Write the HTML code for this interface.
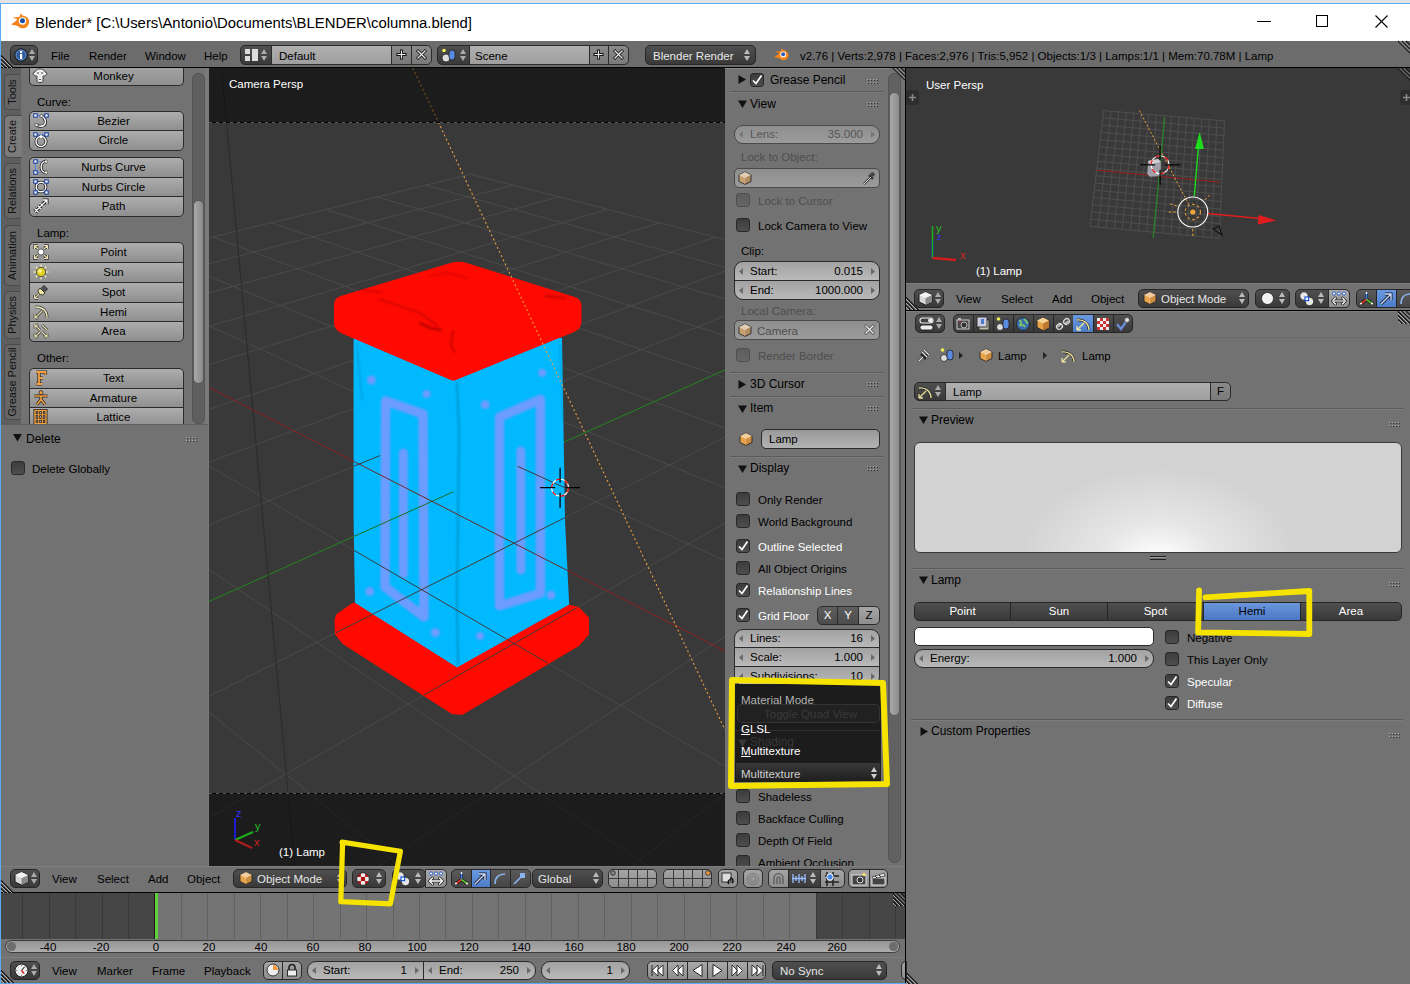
<!DOCTYPE html><html><head><meta charset="utf-8"><style>
*{margin:0;padding:0;box-sizing:border-box}
html,body{width:1410px;height:984px;overflow:hidden;background:#727272;position:relative;font-family:"Liberation Sans",sans-serif}
.t{position:absolute;white-space:nowrap;font-size:11.5px;line-height:14px;color:#000}
.a{position:absolute}
svg.a{overflow:visible}
.tb{background:linear-gradient(#adadad,#8f8f8f);border:1px solid #2b2b2b}
.nm{background:linear-gradient(#a2a2a2,#b9b9b9);border:1px solid #2b2b2b}
.nmd{background:linear-gradient(#8e8e8e,#9c9c9c);border:1px solid #4a4a4a}
.mn{background:linear-gradient(#4f4f4f,#393939);border:1px solid #262626}
.tf{background:linear-gradient(#999,#b3b3b3);border:1px solid #2b2b2b}
.ck{background:linear-gradient(#3c3c3c,#4e4e4e);border:1px solid #282828;border-radius:3px}
.ckd{background:linear-gradient(#5d5d5d,#666);border:1px solid #4f4f4f;border-radius:3px}
.w{color:#fff}
.l{color:#e6e6e6}
</style></head><body><div class="a" style="left:0px;top:0px;width:1410px;height:3px;background:#e3e3e3"></div>
<div class="a" style="left:0px;top:3px;width:1410px;height:1px;background:#5aacf5"></div>
<div class="a" style="left:0px;top:4px;width:1410px;height:37px;background:#fff"></div>
<div class="a" style="left:0px;top:3px;width:1px;height:981px;background:#5aacf5"></div>
<div class="a" style="left:0px;top:982px;width:1410px;height:2px;background:#5aacf5"></div>
<svg class="a" style="left:11px;top:13px;" width="20" height="18" viewBox="0 0 20 18"><g transform="scale(1.0)"><circle cx="11.8" cy="9" r="6.3" fill="#f5841a"/><path d="M0 11.5 L7 6.5 L1.5 4.5 L8.5 4 L9.5 0.5 L12.5 3 L11.5 14 L5 12.5Z" fill="#f5841a"/><circle cx="11.5" cy="8" r="3.7" fill="#fff"/><circle cx="11.5" cy="7.8" r="2.5" fill="#1a4fa0"/></g></svg>
<div class="t" style="left:35px;top:15px;font-size:14.9px;line-height:17px;color:#000">Blender* [C:\Users\Antonio\Documents\BLENDER\columna.blend]</div>
<div class="a" style="left:1257px;top:21px;width:14px;height:1px;background:#000"></div>
<div class="a" style="left:1316px;top:15px;width:12px;height:12px;border:1px solid #000"></div>
<svg class="a" style="left:1375px;top:15px;" width="13" height="13" viewBox="0 0 13 13"><path d="M0.5 0.5 L12.5 12.5 M12.5 0.5 L0.5 12.5" stroke="#000" stroke-width="1.1"/></svg>
<div class="a" style="left:1px;top:41px;width:1409px;height:26px;background:#6c6c6c"></div>
<div class="a" style="left:1px;top:67px;width:1409px;height:1px;background:#000"></div>
<svg class="a" style="left:1px;top:55px;" width="13" height="13" viewBox="0 0 13 13"><path d="M0 0.5 L12.5 13 M0 4.5 L8.5 13 M0 8.5 L4.5 13" stroke="#111" stroke-width="1.1"/><path d="M0 2 L11 13 M0 6 L7 13 M0 10 L3 13" stroke="#b8b8b8" stroke-width="0.9"/></svg>
<svg class="a" style="left:1398px;top:41px;" width="12" height="12" viewBox="0 0 12 12"><path d="M0 0 L12 12 M4 0 L12 8 M8 0 L12 4" stroke="#1e1e1e" stroke-width="1.3"/><path d="M1.5 0 L12 10.5 M5.5 0 L12 6.5" stroke="#b0b0b0" stroke-width="0.7"/></svg>
<div class="a mn" style="left:10px;top:45px;width:28px;height:20px;border-radius:5px 5px 5px 5px;"></div>
<svg class="a" style="left:14px;top:48px;" width="14" height="14" viewBox="0 0 14 14"><circle cx="7" cy="7" r="6.2" fill="#2f5a9a" stroke="#111" stroke-width="1"/><circle cx="7" cy="7" r="5" fill="none" stroke="#7aa0d8" stroke-width="0.8"/><rect x="6" y="6" width="2.2" height="5" fill="#fff"/><circle cx="7.1" cy="4" r="1.2" fill="#fff"/></svg>
<svg class="a" style="left:29px;top:49px;" width="6" height="12" viewBox="0 0 6 12"><path d="M0 5 L3 0 L6 5Z M0 7 L3 12 L6 7Z" fill="#aaa"/></svg>
<div class="t" style="left:51px;top:49px;">File</div>
<div class="t" style="left:89px;top:49px;">Render</div>
<div class="t" style="left:145px;top:49px;">Window</div>
<div class="t" style="left:204px;top:49px;">Help</div>
<div class="a mn" style="left:240px;top:45px;width:32px;height:20px;border-radius:5px 0 0 5px;"></div>
<svg class="a" style="left:245px;top:49px;" width="14" height="12" viewBox="0 0 14 12"><rect x="0" y="0" width="5" height="5" fill="#ddd"/><rect x="0" y="7" width="5" height="5" fill="#ddd"/><rect x="7" y="0" width="6" height="12" fill="#ddd"/></svg>
<svg class="a" style="left:261px;top:49px;" width="6" height="12" viewBox="0 0 6 12"><path d="M0 5 L3 0 L6 5Z M0 7 L3 12 L6 7Z" fill="#aaa"/></svg>
<div class="a tf" style="left:271px;top:45px;width:121px;height:20px;border-radius:0 0 0 0;background:linear-gradient(#b0b0b0,#9e9e9e)"></div>
<div class="t" style="left:279px;top:49px;">Default</div>
<div class="a tb" style="left:391px;top:45px;width:21px;height:20px;border-radius:0 0 0 0;background:linear-gradient(#8a8a8a,#7a7a7a)"></div>
<div class="a tb" style="left:411px;top:45px;width:21px;height:20px;border-radius:0 5px 5px 0;background:linear-gradient(#8a8a8a,#7a7a7a)"></div>
<svg class="a" style="left:396px;top:49px;" width="11" height="11" viewBox="0 0 11 11"><path d="M5.5 0.5 V10.5 M0.5 5.5 H10.5" stroke="#111" stroke-width="3"/><path d="M5.5 1.5 V9.5 M1.5 5.5 H9.5" stroke="#eee" stroke-width="1.2"/></svg>
<svg class="a" style="left:416px;top:49px;" width="11" height="11" viewBox="0 0 11 11"><path d="M1 1 L10 10 M10 1 L1 10" stroke="#111" stroke-width="3"/><path d="M1.5 1.5 L9.5 9.5 M9.5 1.5 L1.5 9.5" stroke="#eee" stroke-width="1.2"/></svg>
<div class="a mn" style="left:437px;top:45px;width:33px;height:20px;border-radius:5px 0 0 5px;"></div>
<svg class="a" style="left:441px;top:48px;" width="16" height="15" viewBox="0 0 16 15"><circle cx="5" cy="10" r="4" fill="#ddd" stroke="#222" stroke-width="0.8"/><rect x="8" y="2" width="6" height="10" rx="3" fill="#5a8be0" stroke="#222" stroke-width="0.8"/><circle cx="3" cy="2.5" r="1.8" fill="#ee5"/></svg>
<svg class="a" style="left:460px;top:49px;" width="6" height="12" viewBox="0 0 6 12"><path d="M0 5 L3 0 L6 5Z M0 7 L3 12 L6 7Z" fill="#aaa"/></svg>
<div class="a tf" style="left:469px;top:45px;width:121px;height:20px;border-radius:0 0 0 0;background:linear-gradient(#b0b0b0,#9e9e9e)"></div>
<div class="t" style="left:475px;top:49px;">Scene</div>
<div class="a tb" style="left:589px;top:45px;width:20px;height:20px;border-radius:0 0 0 0;background:linear-gradient(#8a8a8a,#7a7a7a)"></div>
<div class="a tb" style="left:608px;top:45px;width:21px;height:20px;border-radius:0 5px 5px 0;background:linear-gradient(#8a8a8a,#7a7a7a)"></div>
<svg class="a" style="left:593px;top:49px;" width="11" height="11" viewBox="0 0 11 11"><path d="M5.5 0.5 V10.5 M0.5 5.5 H10.5" stroke="#111" stroke-width="3"/><path d="M5.5 1.5 V9.5 M1.5 5.5 H9.5" stroke="#eee" stroke-width="1.2"/></svg>
<svg class="a" style="left:613px;top:49px;" width="11" height="11" viewBox="0 0 11 11"><path d="M1 1 L10 10 M10 1 L1 10" stroke="#111" stroke-width="3"/><path d="M1.5 1.5 L9.5 9.5 M9.5 1.5 L1.5 9.5" stroke="#eee" stroke-width="1.2"/></svg>
<div class="a mn" style="left:645px;top:45px;width:111px;height:20px;border-radius:5px 5px 5px 5px;"></div>
<div class="t" style="left:653px;top:49px;color:#e8e8e8">Blender Render</div>
<svg class="a" style="left:744px;top:49px;" width="6" height="12" viewBox="0 0 6 12"><path d="M0 5 L3 0 L6 5Z M0 7 L3 12 L6 7Z" fill="#bbb"/></svg>
<svg class="a" style="left:774px;top:48px;" width="20" height="18" viewBox="0 0 20 18"><g transform="scale(0.8)"><circle cx="11.8" cy="9" r="6.3" fill="#f5841a"/><path d="M0 11.5 L7 6.5 L1.5 4.5 L8.5 4 L9.5 0.5 L12.5 3 L11.5 14 L5 12.5Z" fill="#f5841a"/><circle cx="11.5" cy="8" r="3.7" fill="#fff"/><circle cx="11.5" cy="7.8" r="2.5" fill="#2a5bb5"/></g></svg>
<div class="t" style="left:800px;top:49px;">v2.76 | Verts:2,978 | Faces:2,976 | Tris:5,952 | Objects:1/3 | Lamps:1/1 | Mem:70.78M | Lamp</div>
<div class="a" style="left:1px;top:68px;width:207px;height:798px;background:#727272"></div>
<div class="a" style="left:205px;top:68px;width:4px;height:798px;background:#7a7a7a"></div>
<div class="a" style="left:1px;top:68px;width:20px;height:357px;background:#5e5e5e"></div>
<div class="a" style="left:4px;top:74px;width:16px;height:36px;background:#666666;border-radius:5px 0 0 5px;border:1px solid #4a4a4a;border-right:none"></div>
<div class="t" style="left:4px;top:110px;width:36px;height:16px;line-height:16px;text-align:center;transform-origin:0 0;transform:rotate(-90deg);font-size:11px;color:#111">Tools</div>
<div class="a" style="left:4px;top:115px;width:18px;height:43px;background:#7b7b7b;border-radius:5px 0 0 5px;border:1px solid #4a4a4a;border-right:none"></div>
<div class="t" style="left:4px;top:158px;width:43px;height:16px;line-height:16px;text-align:center;transform-origin:0 0;transform:rotate(-90deg);font-size:11px;color:#111">Create</div>
<div class="a" style="left:4px;top:163px;width:16px;height:56px;background:#666666;border-radius:5px 0 0 5px;border:1px solid #4a4a4a;border-right:none"></div>
<div class="t" style="left:4px;top:219px;width:56px;height:16px;line-height:16px;text-align:center;transform-origin:0 0;transform:rotate(-90deg);font-size:11px;color:#111">Relations</div>
<div class="a" style="left:4px;top:225px;width:16px;height:61px;background:#666666;border-radius:5px 0 0 5px;border:1px solid #4a4a4a;border-right:none"></div>
<div class="t" style="left:4px;top:286px;width:61px;height:16px;line-height:16px;text-align:center;transform-origin:0 0;transform:rotate(-90deg);font-size:11px;color:#111">Animation</div>
<div class="a" style="left:4px;top:291px;width:16px;height:48px;background:#666666;border-radius:5px 0 0 5px;border:1px solid #4a4a4a;border-right:none"></div>
<div class="t" style="left:4px;top:339px;width:48px;height:16px;line-height:16px;text-align:center;transform-origin:0 0;transform:rotate(-90deg);font-size:11px;color:#111">Physics</div>
<div class="a" style="left:4px;top:344px;width:16px;height:76px;background:#666666;border-radius:5px 0 0 5px;border:1px solid #4a4a4a;border-right:none"></div>
<div class="t" style="left:4px;top:420px;width:76px;height:16px;line-height:16px;text-align:center;transform-origin:0 0;transform:rotate(-90deg);font-size:11px;color:#111">Grease Pencil</div>
<div class="a" style="left:192px;top:73px;width:13px;height:351px;background:#5f5f5f;border:1px solid #555;border-radius:6px"></div>
<div class="a" style="left:193px;top:200px;width:11px;height:184px;background:linear-gradient(90deg,#a9a9a9,#8a8a8a);border-radius:6px;border:1px solid #5a5a5a"></div>
<div class="a tb" style="left:29px;top:68px;width:155px;height:18px;border-radius:0 0 5px 5px;border-top:none;background:linear-gradient(#a2a2a2,#8f8f8f)"></div>
<div class="t" style="left:43px;top:67px;width:141px;height:19px;line-height:19px;text-align:center;">Monkey</div>
<svg class="a" style="left:32px;top:68px;" width="16" height="16" viewBox="0 0 16 16"><path d="M8 1 C4 1 4 3 3 4 C1 4 0.5 6 2 7 C3 8 4 8 5 8 L5 13 C5 15 11 15 11 13 L11 8 C12 8 13 8 14 7 C15.5 6 15 4 13 4 C12 3 12 1 8 1Z" fill="#eee" stroke="#333" stroke-width="0.9"/><circle cx="6" cy="5" r="1" fill="#777"/><circle cx="10" cy="5" r="1" fill="#777"/><rect x="7" y="11" width="2" height="1" fill="#555"/></svg>
<div class="t" style="left:37px;top:95px;">Curve:</div>
<div class="a tb" style="left:29px;top:111px;width:155px;height:20px;border-radius:5px 5px 0 0;"></div>
<div class="t" style="left:43px;top:111px;width:141px;height:20px;line-height:20px;text-align:center;">Bezier</div>
<svg class="a" style="left:33px;top:113px;" width="16" height="16" viewBox="0 0 16 16"><path d="M2.5 2.5 H13.5" stroke="#5a8ae0" stroke-width="1.2"/><path d="M8.5 3 C13 5 13.5 11 10.5 12.5 C8 13.8 5 13 3.5 12" fill="none" stroke="#1a1a1a" stroke-width="3"/><path d="M8.5 3 C13 5 13.5 11 10.5 12.5 C8 13.8 5 13 3.5 12" fill="none" stroke="#fff" stroke-width="1.4"/><circle cx="8.5" cy="3" r="1.6" fill="#fff" stroke="#222" stroke-width="0.6"/><circle cx="3.5" cy="12" r="1.6" fill="#fff" stroke="#222" stroke-width="0.6"/><rect x="0.8" y="0.8" width="3.4" height="3.4" fill="#fff" stroke="#1b3f9a" stroke-width="1.1"/><rect x="11.8" y="0.8" width="3.4" height="3.4" fill="#fff" stroke="#1b3f9a" stroke-width="1.1"/></svg>
<div class="a tb" style="left:29px;top:130px;width:155px;height:21px;border-radius:0 0 5px 5px;"></div>
<div class="t" style="left:43px;top:130px;width:141px;height:21px;line-height:21px;text-align:center;">Circle</div>
<svg class="a" style="left:33px;top:132px;" width="16" height="16" viewBox="0 0 16 16"><path d="M2.5 2.5 H13.5" stroke="#5a8ae0" stroke-width="1.2"/><circle cx="8" cy="9.5" r="5" fill="none" stroke="#1a1a1a" stroke-width="3"/><circle cx="8" cy="9.5" r="5" fill="none" stroke="#fff" stroke-width="1.4"/><circle cx="8" cy="4.5" r="1.5" fill="#fff"/><rect x="0.8" y="0.8" width="3.4" height="3.4" fill="#fff" stroke="#1b3f9a" stroke-width="1.1"/><rect x="11.8" y="0.8" width="3.4" height="3.4" fill="#fff" stroke="#1b3f9a" stroke-width="1.1"/></svg>
<div class="a tb" style="left:29px;top:157px;width:155px;height:21px;border-radius:5px 5px 0 0;"></div>
<div class="t" style="left:43px;top:157px;width:141px;height:21px;line-height:21px;text-align:center;">Nurbs Curve</div>
<svg class="a" style="left:33px;top:159px;" width="16" height="16" viewBox="0 0 16 16"><path d="M2.5 2.5 V13.5 M2.5 2.5 H8 M2.5 13.5 H8" fill="none" stroke="#5a8ae0" stroke-width="1.2"/><path d="M13 2.5 C6.5 2.5 6.5 13.5 13 13.5" fill="none" stroke="#1a1a1a" stroke-width="3"/><path d="M13 2.5 C6.5 2.5 6.5 13.5 13 13.5" fill="none" stroke="#fff" stroke-width="1.4"/><circle cx="13" cy="2.5" r="1.6" fill="#fff" stroke="#222" stroke-width="0.6"/><circle cx="13" cy="13.5" r="1.6" fill="#fff" stroke="#222" stroke-width="0.6"/><rect x="0.8" y="0.8" width="3.4" height="3.4" fill="#fff" stroke="#1b3f9a" stroke-width="1.1"/><rect x="0.8" y="11.8" width="3.4" height="3.4" fill="#fff" stroke="#1b3f9a" stroke-width="1.1"/></svg>
<div class="a tb" style="left:29px;top:177px;width:155px;height:20px;border-radius:0 0 0 0;"></div>
<div class="t" style="left:43px;top:177px;width:141px;height:20px;line-height:20px;text-align:center;">Nurbs Circle</div>
<svg class="a" style="left:33px;top:179px;" width="16" height="16" viewBox="0 0 16 16"><rect x="2.5" y="2.5" width="11" height="11" fill="none" stroke="#5a8ae0" stroke-width="1"/><circle cx="8" cy="8" r="4.8" fill="none" stroke="#1a1a1a" stroke-width="3"/><circle cx="8" cy="8" r="4.8" fill="none" stroke="#fff" stroke-width="1.4"/><rect x="0.8" y="0.8" width="3.4" height="3.4" fill="#fff" stroke="#1b3f9a" stroke-width="1.1"/><rect x="11.8" y="0.8" width="3.4" height="3.4" fill="#fff" stroke="#1b3f9a" stroke-width="1.1"/><rect x="0.8" y="11.8" width="3.4" height="3.4" fill="#fff" stroke="#1b3f9a" stroke-width="1.1"/><rect x="11.8" y="11.8" width="3.4" height="3.4" fill="#fff" stroke="#1b3f9a" stroke-width="1.1"/></svg>
<div class="a tb" style="left:29px;top:196px;width:155px;height:21px;border-radius:0 0 5px 5px;"></div>
<div class="t" style="left:43px;top:196px;width:141px;height:21px;line-height:21px;text-align:center;">Path</div>
<svg class="a" style="left:33px;top:198px;" width="16" height="16" viewBox="0 0 16 16"><path d="M2 14 L14 2 M9.5 2 H14 V6.5 M5 8 L8 11 M7.5 5.5 L10.5 8.5 M1.5 10.5 L5.5 14.5" fill="none" stroke="#1a1a1a" stroke-width="3"/><path d="M2 14 L14 2 M9.5 2 H14 V6.5 M5 8 L8 11 M7.5 5.5 L10.5 8.5 M1.5 10.5 L5.5 14.5" fill="none" stroke="#fff" stroke-width="1.3"/></svg>
<div class="t" style="left:37px;top:226px;">Lamp:</div>
<div class="a tb" style="left:29px;top:242px;width:155px;height:21px;border-radius:5px 5px 0 0;"></div>
<div class="t" style="left:43px;top:242px;width:141px;height:21px;line-height:21px;text-align:center;">Point</div>
<svg class="a" style="left:33px;top:244px;" width="16" height="16" viewBox="0 0 16 16"><path d="M1.5 5 V1.5 H5 M11 1.5 H14.5 V5 M14.5 11 V14.5 H11 M5 14.5 H1.5 V11 M2 2 L5 5 M14 2 L11 5 M14 14 L11 11 M2 14 L5 11" fill="none" stroke="#333" stroke-width="2.6"/><path d="M1.5 5 V1.5 H5 M11 1.5 H14.5 V5 M14.5 11 V14.5 H11 M5 14.5 H1.5 V11 M2 2 L5 5 M14 2 L11 5 M14 14 L11 11 M2 14 L5 11" fill="none" stroke="#e8e2b0" stroke-width="1.2"/><circle cx="8" cy="8" r="3" fill="#fff" stroke="#444" stroke-width="0.8"/></svg>
<div class="a tb" style="left:29px;top:262px;width:155px;height:21px;border-radius:0 0 0 0;"></div>
<div class="t" style="left:43px;top:262px;width:141px;height:21px;line-height:21px;text-align:center;">Sun</div>
<svg class="a" style="left:33px;top:264px;" width="16" height="16" viewBox="0 0 16 16"><path d="M8 0.5 V15.5 M0.5 8 H15.5 M2.7 2.7 L13.3 13.3 M13.3 2.7 L2.7 13.3" stroke="#e8e2b0" stroke-width="1.4"/><circle cx="8" cy="8" r="4.6" fill="#e0d020" stroke="#444" stroke-width="0.9"/><circle cx="7" cy="7" r="1.8" fill="#fff8a0"/></svg>
<div class="a tb" style="left:29px;top:282px;width:155px;height:21px;border-radius:0 0 0 0;"></div>
<div class="t" style="left:43px;top:282px;width:141px;height:21px;line-height:21px;text-align:center;">Spot</div>
<svg class="a" style="left:33px;top:284px;" width="16" height="16" viewBox="0 0 16 16"><path d="M7 4 L12 9 L9.5 11 C7 11 5 9 5 6.5Z" fill="#ede6a0" stroke="#222" stroke-width="0.9"/><path d="M8.5 4 L11 1.5 L14.5 5 L12 7.5Z" fill="#555" stroke="#222" stroke-width="0.9"/><path d="M1.5 14.5 L6 10 M1.5 14.5 H5 M1.5 14.5 V11" stroke="#333" stroke-width="2.4"/><path d="M1.5 14.5 L6 10 M1.5 14.5 H5 M1.5 14.5 V11" stroke="#e8e2b0" stroke-width="1.1"/></svg>
<div class="a tb" style="left:29px;top:302px;width:155px;height:20px;border-radius:0 0 0 0;"></div>
<div class="t" style="left:43px;top:302px;width:141px;height:20px;line-height:20px;text-align:center;">Hemi</div>
<svg class="a" style="left:33px;top:304px;" width="16" height="16" viewBox="0 0 16 16"><path d="M2.5 3 C9.5 2.5 14.5 7.5 14 14" fill="none" stroke="#333" stroke-width="2.8"/><path d="M2.5 3 C9.5 2.5 14.5 7.5 14 14" fill="none" stroke="#f0eab8" stroke-width="1.4"/><path d="M2 14 L9 7 M2 14 H6 M2 14 V10" stroke="#333" stroke-width="2.6"/><path d="M2 14 L9 7 M2 14 H6 M2 14 V10" stroke="#e8e2b0" stroke-width="1.2"/></svg>
<div class="a tb" style="left:29px;top:321px;width:155px;height:21px;border-radius:0 0 5px 5px;"></div>
<div class="t" style="left:43px;top:321px;width:141px;height:21px;line-height:21px;text-align:center;">Area</div>
<svg class="a" style="left:33px;top:323px;" width="16" height="16" viewBox="0 0 16 16"><path d="M2 14 L7 9 M2 14 H5.5 M2 14 V10.5 M9 2 L14 7 M14 14 L9 9 M14 14 H10.5 M14 14 V10.5 M2 2 L7 7 M2 2 H5.5 M2 2 V5.5" fill="none" stroke="#333" stroke-width="2.6"/><path d="M2 14 L7 9 M2 14 H5.5 M2 14 V10.5 M9 2 L14 7 M14 14 L9 9 M14 14 H10.5 M14 14 V10.5 M2 2 L7 7 M2 2 H5.5 M2 2 V5.5" fill="none" stroke="#e8e2b0" stroke-width="1.2"/></svg>
<div class="t" style="left:37px;top:351px;">Other:</div>
<div class="a tb" style="left:29px;top:368px;width:155px;height:21px;border-radius:5px 5px 0 0;"></div>
<div class="t" style="left:43px;top:368px;width:141px;height:21px;line-height:21px;text-align:center;">Text</div>
<svg class="a" style="left:33px;top:370px;" width="16" height="16" viewBox="0 0 16 16"><path d="M3 2 H12.5 V5 M6 2 V14 M3.5 14 H9 M6 8 H10" fill="none" stroke="#222" stroke-width="3.2"/><path d="M3 2 H12.5 V5 M6 2 V14 M3.5 14 H9 M6 8 H10" fill="none" stroke="#f5a040" stroke-width="1.8"/></svg>
<div class="a tb" style="left:29px;top:388px;width:155px;height:20px;border-radius:0 0 0 0;"></div>
<div class="t" style="left:43px;top:388px;width:141px;height:20px;line-height:20px;text-align:center;">Armature</div>
<svg class="a" style="left:33px;top:390px;" width="16" height="16" viewBox="0 0 16 16"><path d="M1.5 6 H14.5 M8 6 V9.5 L4 14.5 M8 9.5 L12 14.5" fill="none" stroke="#222" stroke-width="3"/><path d="M1.5 6 H14.5 M8 6 V9.5 L4 14.5 M8 9.5 L12 14.5" fill="none" stroke="#f5a040" stroke-width="1.6"/><circle cx="8" cy="2.6" r="2" fill="#f5a040" stroke="#222" stroke-width="0.8"/></svg>
<div class="a tb" style="left:29px;top:407px;width:155px;height:21px;border-radius:0 0 5px 5px;"></div>
<div class="t" style="left:43px;top:407px;width:141px;height:21px;line-height:21px;text-align:center;">Lattice</div>
<svg class="a" style="left:33px;top:409px;" width="16" height="16" viewBox="0 0 16 16"><rect x="2" y="1.5" width="11" height="13" fill="none" stroke="#222" stroke-width="3"/><path d="M5.7 1.5 V14.5 M9.3 1.5 V14.5 M2 5.8 H13 M2 10.2 H13" stroke="#222" stroke-width="2.6"/><rect x="2" y="1.5" width="11" height="13" fill="none" stroke="#f5a040" stroke-width="1.4"/><path d="M5.7 1.5 V14.5 M9.3 1.5 V14.5 M2 5.8 H13 M2 10.2 H13" stroke="#f5a040" stroke-width="1.1"/></svg>
<div class="a" style="left:1px;top:424px;width:207px;height:442px;background:#727272"></div>
<div class="a" style="left:1px;top:424px;width:207px;height:1px;background:#5e5e5e"></div>
<svg class="a" style="left:13px;top:433px;" width="9" height="9" viewBox="0 0 9 9"><path d="M0 1 H9 L4.5 8.5Z" fill="#111"/></svg>
<div class="t" style="left:26px;top:432px;font-size:12px">Delete</div>
<svg class="a" style="left:186px;top:437px;" width="12" height="6" viewBox="0 0 12 6"><rect x="0" y="0" width="1" height="1" fill="#aaa"/><rect x="1" y="1" width="1" height="1" fill="#333"/><rect x="0" y="3" width="1" height="1" fill="#aaa"/><rect x="1" y="4" width="1" height="1" fill="#333"/><rect x="3" y="0" width="1" height="1" fill="#aaa"/><rect x="4" y="1" width="1" height="1" fill="#333"/><rect x="3" y="3" width="1" height="1" fill="#aaa"/><rect x="4" y="4" width="1" height="1" fill="#333"/><rect x="6" y="0" width="1" height="1" fill="#aaa"/><rect x="7" y="1" width="1" height="1" fill="#333"/><rect x="6" y="3" width="1" height="1" fill="#aaa"/><rect x="7" y="4" width="1" height="1" fill="#333"/><rect x="9" y="0" width="1" height="1" fill="#aaa"/><rect x="10" y="1" width="1" height="1" fill="#333"/><rect x="9" y="3" width="1" height="1" fill="#aaa"/><rect x="10" y="4" width="1" height="1" fill="#333"/></svg>
<div class="a ck" style="left:11px;top:461px;width:14px;height:14px;border-radius:3px 3px 3px 3px;"></div>
<div class="t" style="left:32px;top:462px;">Delete Globally</div>
<svg class="a" style="left:209px;top:68px;overflow:hidden" width="516" height="798" viewBox="0 0 516 798"><defs><filter id="blur1" x="-20%" y="-20%" width="140%" height="140%"><feGaussianBlur stdDeviation="1.1"/></filter></defs><rect x="0" y="0" width="516" height="798" fill="#393939"/><line x1="-1061.1" y1="428.2" x2="261.6" y2="106.2" stroke="#4a4a4a" stroke-width="1" /><line x1="-1061.1" y1="428.2" x2="-623.1" y2="7611.7" stroke="#4a4a4a" stroke-width="1" /><line x1="-1058.6" y1="468.9" x2="304.4" y2="117.1" stroke="#4a4a4a" stroke-width="1" /><line x1="-914.0" y1="392.4" x2="311.4" y2="4537.6" stroke="#4a4a4a" stroke-width="1" /><line x1="-1055.8" y1="514.9" x2="350.0" y2="128.8" stroke="#4a4a4a" stroke-width="1" /><line x1="-781.4" y1="360.1" x2="721.1" y2="3190.0" stroke="#4a4a4a" stroke-width="1" /><line x1="-1052.6" y1="567.2" x2="398.7" y2="141.3" stroke="#4a4a4a" stroke-width="1" /><line x1="-661.4" y1="330.9" x2="951.1" y2="2433.4" stroke="#4a4a4a" stroke-width="1" /><line x1="-1048.9" y1="627.3" x2="450.7" y2="154.7" stroke="#4a4a4a" stroke-width="1" /><line x1="-552.1" y1="304.2" x2="1098.4" y2="1948.8" stroke="#4a4a4a" stroke-width="1" /><line x1="-1044.7" y1="697.0" x2="506.5" y2="169.0" stroke="#4a4a4a" stroke-width="1" /><line x1="-452.2" y1="279.9" x2="1200.8" y2="1612.0" stroke="#4a4a4a" stroke-width="1" /><line x1="-1039.7" y1="778.8" x2="566.5" y2="184.4" stroke="#4a4a4a" stroke-width="1" /><line x1="-360.5" y1="257.6" x2="1276.1" y2="1364.3" stroke="#4a4a4a" stroke-width="1" /><line x1="-1033.7" y1="876.3" x2="631.0" y2="201.0" stroke="#4a4a4a" stroke-width="1" /><line x1="-276.2" y1="237.1" x2="1333.8" y2="1174.4" stroke="#4a4a4a" stroke-width="1" /><line x1="-1017.7" y1="1139.9" x2="776.5" y2="238.3" stroke="#4a4a4a" stroke-width="1" /><line x1="-126.0" y1="200.5" x2="1416.5" y2="902.5" stroke="#4a4a4a" stroke-width="1" /><line x1="-1006.4" y1="1324.5" x2="858.7" y2="259.4" stroke="#4a4a4a" stroke-width="1" /><line x1="-58.8" y1="184.2" x2="1447.1" y2="801.9" stroke="#4a4a4a" stroke-width="1" /><line x1="-991.7" y1="1565.9" x2="948.5" y2="282.4" stroke="#4a4a4a" stroke-width="1" /><line x1="3.7" y1="168.9" x2="1472.8" y2="717.3" stroke="#4a4a4a" stroke-width="1" /><line x1="-971.6" y1="1895.1" x2="1046.9" y2="307.7" stroke="#4a4a4a" stroke-width="1" /><line x1="62.1" y1="154.7" x2="1494.7" y2="645.1" stroke="#4a4a4a" stroke-width="1" /><line x1="-942.6" y1="2370.7" x2="1155.3" y2="335.5" stroke="#4a4a4a" stroke-width="1" /><line x1="116.8" y1="141.4" x2="1513.7" y2="582.9" stroke="#4a4a4a" stroke-width="1" /><line x1="-897.0" y1="3118.5" x2="1275.1" y2="366.2" stroke="#4a4a4a" stroke-width="1" /><line x1="168.0" y1="128.9" x2="1530.1" y2="528.6" stroke="#4a4a4a" stroke-width="1" /><line x1="-814.9" y1="4465.2" x2="1408.4" y2="400.4" stroke="#4a4a4a" stroke-width="1" /><line x1="216.2" y1="117.2" x2="1544.6" y2="480.9" stroke="#4a4a4a" stroke-width="1" /><line x1="-623.1" y1="7611.7" x2="1557.5" y2="438.7" stroke="#4a4a4a" stroke-width="1" /><line x1="261.6" y1="106.2" x2="1557.5" y2="438.7" stroke="#4a4a4a" stroke-width="1" /><line x1="-198.2" y1="218.1" x2="1379.5" y2="1024.3" stroke="#8e1f1f" stroke-width="1" /><line x1="-1026.5" y1="994.2" x2="700.8" y2="218.9" stroke="#22861f" stroke-width="1" /><line x1="12.5" y1="0.0" x2="85.7" y2="798.0" stroke="#2b2b2b" stroke-width="1" /><polygon points="144.6,270.0 144.6,452.0 146.0,536.0 248.0,600.5 360.2,537.0 356.0,452.0 353.0,270.0" fill="#00b9ff" /><polygon points="142.8,536.5 128.0,547.0 126.5,552.0 127.0,566.0 134.0,575.0 243.0,645.0 253.0,646.0 369.0,577.5 379.0,566.0 379.0,550.0 369.0,539.8 360.0,537.8 248.0,600.5 145.8,535.8" fill="#fe0a00" stroke="#fe0a00" stroke-width="2" stroke-linejoin="round"/><g filter="url(#blur1)"><polyline points="176.6,333.0 214.0,346.0 215.0,549.0 176.0,519.0 176.6,333.0" fill="none" stroke="#6c9cff" stroke-width="9.5" stroke-linejoin="round" stroke-linecap="round"/><polyline points="194.4,385.0 194.4,506.0" fill="none" stroke="#6c9cff" stroke-width="9" stroke-linejoin="round" stroke-linecap="round"/><polyline points="290.5,349.0 331.4,331.4 331.4,525.3 290.5,537.8 290.5,349.0" fill="none" stroke="#6c9cff" stroke-width="9.5" stroke-linejoin="round" stroke-linecap="round"/><polyline points="311.8,383.0 311.8,502.0" fill="none" stroke="#6c9cff" stroke-width="9" stroke-linejoin="round" stroke-linecap="round"/><circle cx="162.4" cy="312.0" r="4.5" fill="#6c9cff"/><circle cx="217.5" cy="326.0" r="4" fill="#6c9cff"/><circle cx="160.6" cy="523.6" r="4.5" fill="#6c9cff"/><circle cx="226.4" cy="564.5" r="4.5" fill="#6c9cff"/><circle cx="276.2" cy="336.7" r="4.5" fill="#6c9cff"/><circle cx="333.2" cy="304.7" r="4" fill="#6c9cff"/><circle cx="342.0" cy="527.0" r="4.5" fill="#6c9cff"/><circle cx="271.0" cy="568.0" r="4" fill="#6c9cff"/></g><path d="M241.4 195.1 Q250.0 192.5 258.6 195.2 L365.8 228.9 Q372.5 231.0 372.5 238.0 L372.5 253.0 Q372.5 261.0 365.1 264.0 L246.8 311.9 Q244.0 313.0 241.2 311.8 L132.4 265.2 Q125.0 262.0 125.0 254.0 L125.0 237.0 Q125.0 230.0 131.7 228.0 Z" fill="#fe0a00" /><g filter="url(#blur1)" opacity="0.7"><polyline points="170.0,231.0 211.0,245.0 229.0,258.0" fill="none" stroke="#9a0000" stroke-width="1.2" stroke-linejoin="round" stroke-linecap="round"/><polyline points="221.0,208.0 238.0,205.0 259.0,210.0" fill="none" stroke="#b00000" stroke-width="1.2" stroke-linejoin="round" stroke-linecap="round"/><polyline points="211.0,255.0 221.0,260.0 232.0,262.0" fill="none" stroke="#8a0000" stroke-width="2" stroke-linejoin="round" stroke-linecap="round"/><polyline points="244.0,263.0 242.0,277.0 246.0,284.0" fill="none" stroke="#900000" stroke-width="1.5" stroke-linejoin="round" stroke-linecap="round"/><polyline points="336.0,228.0 357.0,230.0" fill="none" stroke="#900000" stroke-width="1.5" stroke-linejoin="round" stroke-linecap="round"/><polyline points="151.0,222.0 173.0,224.0" fill="none" stroke="#a00000" stroke-width="1.2" stroke-linejoin="round" stroke-linecap="round"/></g><g opacity="0.55" filter="url(#blur1)"><polyline points="248.0,315.0 250.0,362.0 249.0,452.0 248.0,532.0 249.0,597.0" fill="none" stroke="#006a90" stroke-width="1.6" stroke-linejoin="round" stroke-linecap="round"/><polyline points="148.0,277.0 153.0,332.0" fill="none" stroke="#0080a8" stroke-width="1.2" stroke-linejoin="round" stroke-linecap="round"/><polyline points="351.0,277.0 354.0,352.0" fill="none" stroke="#0080a8" stroke-width="1.2" stroke-linejoin="round" stroke-linecap="round"/></g><clipPath id="cvis"><polygon points="248.2,425.7 -179.6,213.6 -59.0,832.0 591.0,832.0 704.5,219.8"/></clipPath><clipPath id="ccol"><polygon points="144.6,270.0 144.6,452.0 146.0,536.0 248.0,600.5 360.2,537.0 356.0,452.0 353.0,270.0" fill="#000" /><polygon points="142.8,536.5 128.0,547.0 126.5,552.0 127.0,566.0 134.0,575.0 243.0,645.0 253.0,646.0 369.0,577.5 379.0,566.0 379.0,550.0 369.0,539.8 360.0,537.8 248.0,600.5 145.8,535.8" fill="#000" /></clipPath><g clip-path="url(#ccol)"><g clip-path="url(#cvis)"><line x1="-1061.1" y1="428.2" x2="261.6" y2="106.2" stroke="#3c3c3c" stroke-width="1" /><line x1="-1061.1" y1="428.2" x2="-623.1" y2="7611.7" stroke="#3c3c3c" stroke-width="1" /><line x1="-1058.6" y1="468.9" x2="304.4" y2="117.1" stroke="#3c3c3c" stroke-width="1" /><line x1="-914.0" y1="392.4" x2="311.4" y2="4537.6" stroke="#3c3c3c" stroke-width="1" /><line x1="-1055.8" y1="514.9" x2="350.0" y2="128.8" stroke="#3c3c3c" stroke-width="1" /><line x1="-781.4" y1="360.1" x2="721.1" y2="3190.0" stroke="#3c3c3c" stroke-width="1" /><line x1="-1052.6" y1="567.2" x2="398.7" y2="141.3" stroke="#3c3c3c" stroke-width="1" /><line x1="-661.4" y1="330.9" x2="951.1" y2="2433.4" stroke="#3c3c3c" stroke-width="1" /><line x1="-1048.9" y1="627.3" x2="450.7" y2="154.7" stroke="#3c3c3c" stroke-width="1" /><line x1="-552.1" y1="304.2" x2="1098.4" y2="1948.8" stroke="#3c3c3c" stroke-width="1" /><line x1="-1044.7" y1="697.0" x2="506.5" y2="169.0" stroke="#3c3c3c" stroke-width="1" /><line x1="-452.2" y1="279.9" x2="1200.8" y2="1612.0" stroke="#3c3c3c" stroke-width="1" /><line x1="-1039.7" y1="778.8" x2="566.5" y2="184.4" stroke="#3c3c3c" stroke-width="1" /><line x1="-360.5" y1="257.6" x2="1276.1" y2="1364.3" stroke="#3c3c3c" stroke-width="1" /><line x1="-1033.7" y1="876.3" x2="631.0" y2="201.0" stroke="#3c3c3c" stroke-width="1" /><line x1="-276.2" y1="237.1" x2="1333.8" y2="1174.4" stroke="#3c3c3c" stroke-width="1" /><line x1="-1017.7" y1="1139.9" x2="776.5" y2="238.3" stroke="#3c3c3c" stroke-width="1" /><line x1="-126.0" y1="200.5" x2="1416.5" y2="902.5" stroke="#3c3c3c" stroke-width="1" /><line x1="-1006.4" y1="1324.5" x2="858.7" y2="259.4" stroke="#3c3c3c" stroke-width="1" /><line x1="-58.8" y1="184.2" x2="1447.1" y2="801.9" stroke="#3c3c3c" stroke-width="1" /><line x1="-991.7" y1="1565.9" x2="948.5" y2="282.4" stroke="#3c3c3c" stroke-width="1" /><line x1="3.7" y1="168.9" x2="1472.8" y2="717.3" stroke="#3c3c3c" stroke-width="1" /><line x1="-971.6" y1="1895.1" x2="1046.9" y2="307.7" stroke="#3c3c3c" stroke-width="1" /><line x1="62.1" y1="154.7" x2="1494.7" y2="645.1" stroke="#3c3c3c" stroke-width="1" /><line x1="-942.6" y1="2370.7" x2="1155.3" y2="335.5" stroke="#3c3c3c" stroke-width="1" /><line x1="116.8" y1="141.4" x2="1513.7" y2="582.9" stroke="#3c3c3c" stroke-width="1" /><line x1="-897.0" y1="3118.5" x2="1275.1" y2="366.2" stroke="#3c3c3c" stroke-width="1" /><line x1="168.0" y1="128.9" x2="1530.1" y2="528.6" stroke="#3c3c3c" stroke-width="1" /><line x1="-814.9" y1="4465.2" x2="1408.4" y2="400.4" stroke="#3c3c3c" stroke-width="1" /><line x1="216.2" y1="117.2" x2="1544.6" y2="480.9" stroke="#3c3c3c" stroke-width="1" /><line x1="-623.1" y1="7611.7" x2="1557.5" y2="438.7" stroke="#3c3c3c" stroke-width="1" /><line x1="261.6" y1="106.2" x2="1557.5" y2="438.7" stroke="#3c3c3c" stroke-width="1" /><line x1="-1026.5" y1="994.2" x2="700.8" y2="218.9" stroke="#1f6e1f" stroke-width="1" /></g><line x1="-198.2" y1="218.1" x2="1379.5" y2="1024.3" stroke="#6a2a2a" stroke-width="1" /></g><line x1="203.8" y1="0.0" x2="516.0" y2="662.0" stroke="#eda040" stroke-width="1.1" stroke-dasharray="2 2.6"/><rect x="0" y="0" width="516" height="54" fill="rgba(0,0,0,0.5)"/><rect x="0" y="725" width="516" height="73" fill="rgba(0,0,0,0.5)"/><line x1="0" y1="54.5" x2="516" y2="54.5" stroke="#000" stroke-width="1"/><line x1="0" y1="54.5" x2="516" y2="54.5" stroke="#5a5a5a" stroke-width="1" stroke-dasharray="3 4"/><line x1="0" y1="725.5" x2="516" y2="725.5" stroke="#000" stroke-width="1"/><line x1="0" y1="725.5" x2="516" y2="725.5" stroke="#5a5a5a" stroke-width="1" stroke-dasharray="3 4"/><circle cx="351.1" cy="419.7" r="8.5" fill="none" stroke="#fff" stroke-width="1.3"/><circle cx="351.1" cy="419.7" r="8.5" fill="none" stroke="#e00" stroke-width="1.3" stroke-dasharray="4.45 4.45"/><path d="M331.1 419.7H346.1M356.1 419.7H371.1M351.1 399.7V414.7M351.1 424.7V439.7" stroke="#000" stroke-width="1.3"/><path d="M26 772V750" stroke="#1c1cd0" stroke-width="2"/><path d="M26 772L44 764" stroke="#1cb01c" stroke-width="2"/><path d="M26 772L43 780" stroke="#b01c1c" stroke-width="2"/><text x="27" y="749" fill="#3030ff" font-size="11" font-family="Liberation Sans">z</text><text x="46" y="762" fill="#22c022" font-size="11" font-family="Liberation Sans">y</text><text x="45" y="778" fill="#d02020" font-size="11" font-family="Liberation Sans">x</text></svg>
<div class="t" style="left:229px;top:77px;color:#fff">Camera Persp</div>
<div class="t" style="left:279px;top:845px;color:#fff">(1) Lamp</div>
<div class="a" style="left:725px;top:68px;width:180px;height:798px;background:#727272"></div>
<div class="a" style="left:725px;top:68px;width:164px;height:1px;background:#8a8a8a"></div>
<svg class="a" style="left:738px;top:75px;" width="8" height="9" viewBox="0 0 8 9"><path d="M0.5 0 V9 L8 4.5Z" fill="#111"/></svg>
<div class="a ck" style="left:750px;top:73px;width:14px;height:14px;border-radius:3px 3px 3px 3px;"></div>
<svg class="a" style="left:750px;top:73px;" width="14" height="14" viewBox="0 0 14 14"><path d="M3 7.5 L6 10.5 L11.5 2.5" fill="none" stroke="#fff" stroke-width="1.7"/></svg>
<div class="t" style="left:770px;top:73px;font-size:12px">Grease Pencil</div>
<svg class="a" style="left:867px;top:79px;" width="12" height="6" viewBox="0 0 12 6"><rect x="0" y="0" width="1" height="1" fill="#aaa"/><rect x="1" y="1" width="1" height="1" fill="#333"/><rect x="0" y="3" width="1" height="1" fill="#aaa"/><rect x="1" y="4" width="1" height="1" fill="#333"/><rect x="3" y="0" width="1" height="1" fill="#aaa"/><rect x="4" y="1" width="1" height="1" fill="#333"/><rect x="3" y="3" width="1" height="1" fill="#aaa"/><rect x="4" y="4" width="1" height="1" fill="#333"/><rect x="6" y="0" width="1" height="1" fill="#aaa"/><rect x="7" y="1" width="1" height="1" fill="#333"/><rect x="6" y="3" width="1" height="1" fill="#aaa"/><rect x="7" y="4" width="1" height="1" fill="#333"/><rect x="9" y="0" width="1" height="1" fill="#aaa"/><rect x="10" y="1" width="1" height="1" fill="#333"/><rect x="9" y="3" width="1" height="1" fill="#aaa"/><rect x="10" y="4" width="1" height="1" fill="#333"/></svg>
<div class="a" style="left:730px;top:91px;width:153px;height:1px;background:#5a5a5a"></div>
<div class="a" style="left:730px;top:92px;width:153px;height:1px;background:#7c7c7c"></div>
<svg class="a" style="left:738px;top:100px;" width="9" height="8" viewBox="0 0 9 8"><path d="M0 0.5 H9 L4.5 8Z" fill="#111"/></svg>
<div class="t" style="left:750px;top:97px;font-size:12px">View</div>
<svg class="a" style="left:867px;top:102px;" width="12" height="6" viewBox="0 0 12 6"><rect x="0" y="0" width="1" height="1" fill="#aaa"/><rect x="1" y="1" width="1" height="1" fill="#333"/><rect x="0" y="3" width="1" height="1" fill="#aaa"/><rect x="1" y="4" width="1" height="1" fill="#333"/><rect x="3" y="0" width="1" height="1" fill="#aaa"/><rect x="4" y="1" width="1" height="1" fill="#333"/><rect x="3" y="3" width="1" height="1" fill="#aaa"/><rect x="4" y="4" width="1" height="1" fill="#333"/><rect x="6" y="0" width="1" height="1" fill="#aaa"/><rect x="7" y="1" width="1" height="1" fill="#333"/><rect x="6" y="3" width="1" height="1" fill="#aaa"/><rect x="7" y="4" width="1" height="1" fill="#333"/><rect x="9" y="0" width="1" height="1" fill="#aaa"/><rect x="10" y="1" width="1" height="1" fill="#333"/><rect x="9" y="3" width="1" height="1" fill="#aaa"/><rect x="10" y="4" width="1" height="1" fill="#333"/></svg>
<div class="a nmd" style="left:734px;top:125px;width:146px;height:19px;border-radius:9px 9px 9px 9px;"></div>
<svg class="a" style="left:739px;top:131px;" width="5" height="7" viewBox="0 0 5 7"><path d="M4 0 L0 3.5 L4 7Z" fill="#777"/></svg>
<svg class="a" style="left:870px;top:131px;" width="5" height="7" viewBox="0 0 5 7"><path d="M1 0 L5 3.5 L1 7Z" fill="#777"/></svg>
<div class="t" style="left:750px;top:125px;height:19px;line-height:19px;color:#555">Lens:</div>
<div class="t" style="left:734px;top:125px;width:129px;height:19px;line-height:19px;text-align:right;color:#555">35.000</div>
<div class="t" style="left:741px;top:150px;color:#4e4e4e">Lock to Object:</div>
<div class="a nmd" style="left:734px;top:168px;width:146px;height:20px;border-radius:5px 5px 5px 5px;background:linear-gradient(#8e8e8e,#9b9b9b)"></div>
<svg class="a" style="left:738px;top:171px;" width="14" height="14" viewBox="0 0 14 14"><path d="M7 0.8 L13 3.8 V10.5 L7 13.4 L1 10.5 V3.8Z" fill="#c9a070" stroke="#2a2a2a" stroke-width="0.9"/><path d="M1 3.8 L7 6.8 L13 3.8 M7 6.8 V13.4" fill="none" stroke="#fff3" stroke-width="0.9"/><path d="M7 0.8 L13 3.8 L7 6.8 L1 3.8Z" fill="#fff" opacity="0.45"/><path d="M7 6.8 L13 3.8 V10.5 L7 13.4Z" fill="#000" opacity="0.12"/></svg>
<svg class="a" style="left:862px;top:171px;" width="13" height="14" viewBox="0 0 13 14"><path d="M2 13 L9 6 M7 4 L11 8" stroke="#333" stroke-width="2.2"/><path d="M2 13 L9 6" stroke="#ddd" stroke-width="1"/><circle cx="10.5" cy="3.5" r="2.3" fill="#444"/></svg>
<div class="a ckd" style="left:736px;top:193px;width:14px;height:14px;border-radius:3px 3px 3px 3px;"></div>
<div class="t" style="left:758px;top:194px;color:#4e4e4e">Lock to Cursor</div>
<div class="a ck" style="left:736px;top:218px;width:14px;height:14px;border-radius:3px 3px 3px 3px;"></div>
<div class="t" style="left:758px;top:219px;">Lock Camera to View</div>
<div class="t" style="left:741px;top:244px;">Clip:</div>
<div class="a nm" style="left:734px;top:261px;width:146px;height:20px;border-radius:9px 9px 0 0;"></div>
<svg class="a" style="left:739px;top:268px;" width="5" height="7" viewBox="0 0 5 7"><path d="M4 0 L0 3.5 L4 7Z" fill="#6a6a6a"/></svg>
<svg class="a" style="left:870px;top:268px;" width="5" height="7" viewBox="0 0 5 7"><path d="M1 0 L5 3.5 L1 7Z" fill="#6a6a6a"/></svg>
<div class="t" style="left:750px;top:261px;height:20px;line-height:20px;color:#000">Start:</div>
<div class="t" style="left:734px;top:261px;width:129px;height:20px;line-height:20px;text-align:right;color:#000">0.015</div>
<div class="a nm" style="left:734px;top:280px;width:146px;height:20px;border-radius:0 0 9px 9px;"></div>
<svg class="a" style="left:739px;top:287px;" width="5" height="7" viewBox="0 0 5 7"><path d="M4 0 L0 3.5 L4 7Z" fill="#6a6a6a"/></svg>
<svg class="a" style="left:870px;top:287px;" width="5" height="7" viewBox="0 0 5 7"><path d="M1 0 L5 3.5 L1 7Z" fill="#6a6a6a"/></svg>
<div class="t" style="left:750px;top:280px;height:20px;line-height:20px;color:#000">End:</div>
<div class="t" style="left:734px;top:280px;width:129px;height:20px;line-height:20px;text-align:right;color:#000">1000.000</div>
<div class="t" style="left:741px;top:304px;color:#4e4e4e">Local Camera:</div>
<div class="a nmd" style="left:734px;top:320px;width:146px;height:20px;border-radius:5px 5px 5px 5px;background:linear-gradient(#8e8e8e,#9b9b9b)"></div>
<svg class="a" style="left:738px;top:323px;" width="14" height="14" viewBox="0 0 14 14"><path d="M7 0.8 L13 3.8 V10.5 L7 13.4 L1 10.5 V3.8Z" fill="#c9a070" stroke="#2a2a2a" stroke-width="0.9"/><path d="M1 3.8 L7 6.8 L13 3.8 M7 6.8 V13.4" fill="none" stroke="#fff3" stroke-width="0.9"/><path d="M7 0.8 L13 3.8 L7 6.8 L1 3.8Z" fill="#fff" opacity="0.45"/><path d="M7 6.8 L13 3.8 V10.5 L7 13.4Z" fill="#000" opacity="0.12"/></svg>
<div class="t" style="left:757px;top:324px;color:#4e4e4e">Camera</div>
<svg class="a" style="left:864px;top:324px;" width="11" height="11" viewBox="0 0 11 11"><path d="M1 1 L10 10 M10 1 L1 10" stroke="#555" stroke-width="3"/><path d="M1.5 1.5 L9.5 9.5 M9.5 1.5 L1.5 9.5" stroke="#eee" stroke-width="1.2"/></svg>
<div class="a ckd" style="left:736px;top:348px;width:14px;height:14px;border-radius:3px 3px 3px 3px;"></div>
<div class="t" style="left:758px;top:349px;color:#4e4e4e">Render Border</div>
<div class="a" style="left:730px;top:372px;width:153px;height:1px;background:#5a5a5a"></div>
<div class="a" style="left:730px;top:373px;width:153px;height:1px;background:#7c7c7c"></div>
<svg class="a" style="left:738px;top:380px;" width="8" height="9" viewBox="0 0 8 9"><path d="M0.5 0 V9 L8 4.5Z" fill="#111"/></svg>
<div class="t" style="left:750px;top:377px;font-size:12px">3D Cursor</div>
<svg class="a" style="left:867px;top:382px;" width="12" height="6" viewBox="0 0 12 6"><rect x="0" y="0" width="1" height="1" fill="#aaa"/><rect x="1" y="1" width="1" height="1" fill="#333"/><rect x="0" y="3" width="1" height="1" fill="#aaa"/><rect x="1" y="4" width="1" height="1" fill="#333"/><rect x="3" y="0" width="1" height="1" fill="#aaa"/><rect x="4" y="1" width="1" height="1" fill="#333"/><rect x="3" y="3" width="1" height="1" fill="#aaa"/><rect x="4" y="4" width="1" height="1" fill="#333"/><rect x="6" y="0" width="1" height="1" fill="#aaa"/><rect x="7" y="1" width="1" height="1" fill="#333"/><rect x="6" y="3" width="1" height="1" fill="#aaa"/><rect x="7" y="4" width="1" height="1" fill="#333"/><rect x="9" y="0" width="1" height="1" fill="#aaa"/><rect x="10" y="1" width="1" height="1" fill="#333"/><rect x="9" y="3" width="1" height="1" fill="#aaa"/><rect x="10" y="4" width="1" height="1" fill="#333"/></svg>
<div class="a" style="left:730px;top:396px;width:153px;height:1px;background:#5a5a5a"></div>
<div class="a" style="left:730px;top:397px;width:153px;height:1px;background:#7c7c7c"></div>
<svg class="a" style="left:738px;top:405px;" width="9" height="8" viewBox="0 0 9 8"><path d="M0 0.5 H9 L4.5 8Z" fill="#111"/></svg>
<div class="t" style="left:750px;top:401px;font-size:12px">Item</div>
<svg class="a" style="left:867px;top:406px;" width="12" height="6" viewBox="0 0 12 6"><rect x="0" y="0" width="1" height="1" fill="#aaa"/><rect x="1" y="1" width="1" height="1" fill="#333"/><rect x="0" y="3" width="1" height="1" fill="#aaa"/><rect x="1" y="4" width="1" height="1" fill="#333"/><rect x="3" y="0" width="1" height="1" fill="#aaa"/><rect x="4" y="1" width="1" height="1" fill="#333"/><rect x="3" y="3" width="1" height="1" fill="#aaa"/><rect x="4" y="4" width="1" height="1" fill="#333"/><rect x="6" y="0" width="1" height="1" fill="#aaa"/><rect x="7" y="1" width="1" height="1" fill="#333"/><rect x="6" y="3" width="1" height="1" fill="#aaa"/><rect x="7" y="4" width="1" height="1" fill="#333"/><rect x="9" y="0" width="1" height="1" fill="#aaa"/><rect x="10" y="1" width="1" height="1" fill="#333"/><rect x="9" y="3" width="1" height="1" fill="#aaa"/><rect x="10" y="4" width="1" height="1" fill="#333"/></svg>
<svg class="a" style="left:739px;top:432px;" width="14" height="14" viewBox="0 0 14 14"><path d="M7 0.8 L13 3.8 V10.5 L7 13.4 L1 10.5 V3.8Z" fill="#e8a24a" stroke="#2a2a2a" stroke-width="0.9"/><path d="M1 3.8 L7 6.8 L13 3.8 M7 6.8 V13.4" fill="none" stroke="#fff3" stroke-width="0.9"/><path d="M7 0.8 L13 3.8 L7 6.8 L1 3.8Z" fill="#fff" opacity="0.45"/><path d="M7 6.8 L13 3.8 V10.5 L7 13.4Z" fill="#000" opacity="0.12"/></svg>
<div class="a tf" style="left:761px;top:429px;width:119px;height:20px;border-radius:5px 5px 5px 5px;"></div>
<div class="t" style="left:769px;top:432px;">Lamp</div>
<div class="a" style="left:730px;top:456px;width:153px;height:1px;background:#5a5a5a"></div>
<div class="a" style="left:730px;top:457px;width:153px;height:1px;background:#7c7c7c"></div>
<svg class="a" style="left:738px;top:465px;" width="9" height="8" viewBox="0 0 9 8"><path d="M0 0.5 H9 L4.5 8Z" fill="#111"/></svg>
<div class="t" style="left:750px;top:461px;font-size:12px">Display</div>
<svg class="a" style="left:867px;top:466px;" width="12" height="6" viewBox="0 0 12 6"><rect x="0" y="0" width="1" height="1" fill="#aaa"/><rect x="1" y="1" width="1" height="1" fill="#333"/><rect x="0" y="3" width="1" height="1" fill="#aaa"/><rect x="1" y="4" width="1" height="1" fill="#333"/><rect x="3" y="0" width="1" height="1" fill="#aaa"/><rect x="4" y="1" width="1" height="1" fill="#333"/><rect x="3" y="3" width="1" height="1" fill="#aaa"/><rect x="4" y="4" width="1" height="1" fill="#333"/><rect x="6" y="0" width="1" height="1" fill="#aaa"/><rect x="7" y="1" width="1" height="1" fill="#333"/><rect x="6" y="3" width="1" height="1" fill="#aaa"/><rect x="7" y="4" width="1" height="1" fill="#333"/><rect x="9" y="0" width="1" height="1" fill="#aaa"/><rect x="10" y="1" width="1" height="1" fill="#333"/><rect x="9" y="3" width="1" height="1" fill="#aaa"/><rect x="10" y="4" width="1" height="1" fill="#333"/></svg>
<div class="a ck" style="left:736px;top:492px;width:14px;height:14px;border-radius:3px 3px 3px 3px;"></div>
<div class="t" style="left:758px;top:493px;">Only Render</div>
<div class="a ck" style="left:736px;top:514px;width:14px;height:14px;border-radius:3px 3px 3px 3px;"></div>
<div class="t" style="left:758px;top:515px;">World Background</div>
<div class="a ck" style="left:736px;top:539px;width:14px;height:14px;border-radius:3px 3px 3px 3px;"></div>
<svg class="a" style="left:736px;top:539px;" width="14" height="14" viewBox="0 0 14 14"><path d="M3 7.5 L6 10.5 L11.5 2.5" fill="none" stroke="#fff" stroke-width="1.7"/></svg>
<div class="t" style="left:758px;top:540px;color:#fff">Outline Selected</div>
<div class="a ck" style="left:736px;top:561px;width:14px;height:14px;border-radius:3px 3px 3px 3px;"></div>
<div class="t" style="left:758px;top:562px;">All Object Origins</div>
<div class="a ck" style="left:736px;top:583px;width:14px;height:14px;border-radius:3px 3px 3px 3px;"></div>
<svg class="a" style="left:736px;top:583px;" width="14" height="14" viewBox="0 0 14 14"><path d="M3 7.5 L6 10.5 L11.5 2.5" fill="none" stroke="#fff" stroke-width="1.7"/></svg>
<div class="t" style="left:758px;top:584px;color:#fff">Relationship Lines</div>
<div class="a ck" style="left:736px;top:608px;width:14px;height:14px;border-radius:3px 3px 3px 3px;"></div>
<svg class="a" style="left:736px;top:608px;" width="14" height="14" viewBox="0 0 14 14"><path d="M3 7.5 L6 10.5 L11.5 2.5" fill="none" stroke="#fff" stroke-width="1.7"/></svg>
<div class="t" style="left:758px;top:609px;color:#fff">Grid Floor</div>
<div class="a tb" style="left:817px;top:606px;width:21px;height:19px;border-radius:5px 0 0 5px;background:linear-gradient(#5e5e5e,#4c4c4c)"></div>
<div class="t" style="left:817px;top:606px;width:21px;height:19px;line-height:19px;text-align:center;color:#fff">X</div>
<div class="a tb" style="left:837px;top:606px;width:22px;height:19px;border-radius:0 0 0 0;background:linear-gradient(#5e5e5e,#4c4c4c)"></div>
<div class="t" style="left:837px;top:606px;width:22px;height:19px;line-height:19px;text-align:center;color:#fff">Y</div>
<div class="a tb" style="left:858px;top:606px;width:22px;height:19px;border-radius:0 5px 5px 0;background:linear-gradient(#a6a6a6,#8e8e8e)"></div>
<div class="t" style="left:858px;top:606px;width:22px;height:19px;line-height:19px;text-align:center;">Z</div>
<div class="a nm" style="left:734px;top:629px;width:146px;height:19px;border-radius:9px 9px 0 0;"></div>
<svg class="a" style="left:739px;top:635px;" width="5" height="7" viewBox="0 0 5 7"><path d="M4 0 L0 3.5 L4 7Z" fill="#6a6a6a"/></svg>
<svg class="a" style="left:870px;top:635px;" width="5" height="7" viewBox="0 0 5 7"><path d="M1 0 L5 3.5 L1 7Z" fill="#6a6a6a"/></svg>
<div class="t" style="left:750px;top:629px;height:19px;line-height:19px;color:#000">Lines:</div>
<div class="t" style="left:734px;top:629px;width:129px;height:19px;line-height:19px;text-align:right;color:#000">16</div>
<div class="a nm" style="left:734px;top:647px;width:146px;height:20px;border-radius:0 0 0 0;"></div>
<svg class="a" style="left:739px;top:654px;" width="5" height="7" viewBox="0 0 5 7"><path d="M4 0 L0 3.5 L4 7Z" fill="#6a6a6a"/></svg>
<svg class="a" style="left:870px;top:654px;" width="5" height="7" viewBox="0 0 5 7"><path d="M1 0 L5 3.5 L1 7Z" fill="#6a6a6a"/></svg>
<div class="t" style="left:750px;top:647px;height:20px;line-height:20px;color:#000">Scale:</div>
<div class="t" style="left:734px;top:647px;width:129px;height:20px;line-height:20px;text-align:right;color:#000">1.000</div>
<div class="a nm" style="left:734px;top:666px;width:146px;height:20px;border-radius:0 0 9px 9px;"></div>
<svg class="a" style="left:739px;top:673px;" width="5" height="7" viewBox="0 0 5 7"><path d="M4 0 L0 3.5 L4 7Z" fill="#6a6a6a"/></svg>
<svg class="a" style="left:870px;top:673px;" width="5" height="7" viewBox="0 0 5 7"><path d="M1 0 L5 3.5 L1 7Z" fill="#6a6a6a"/></svg>
<div class="t" style="left:750px;top:666px;height:20px;line-height:20px;color:#000">Subdivisions:</div>
<div class="t" style="left:734px;top:666px;width:129px;height:20px;line-height:20px;text-align:right;color:#000">10</div>
<div class="a ck" style="left:736px;top:789px;width:14px;height:14px;border-radius:3px 3px 3px 3px;"></div>
<div class="t" style="left:758px;top:790px;">Shadeless</div>
<div class="a ck" style="left:736px;top:811px;width:14px;height:14px;border-radius:3px 3px 3px 3px;"></div>
<div class="t" style="left:758px;top:812px;">Backface Culling</div>
<div class="a ck" style="left:736px;top:833px;width:14px;height:14px;border-radius:3px 3px 3px 3px;"></div>
<div class="t" style="left:758px;top:834px;">Depth Of Field</div>
<div class="a ck" style="left:736px;top:855px;width:14px;height:14px;border-radius:3px 3px 3px 3px;"></div>
<div class="t" style="left:758px;top:856px;">Ambient Occlusion</div>
<div class="a" style="left:888px;top:73px;width:13px;height:790px;background:#616161;border:1px solid #565656;border-radius:6px"></div>
<div class="a" style="left:889px;top:92px;width:11px;height:624px;background:linear-gradient(90deg,#a8a8a8,#8c8c8c);border:1px solid #5c5c5c;border-radius:6px"></div>
<div class="a" style="left:735px;top:684px;width:146px;height:98px;background:rgba(22,22,22,0.93);border-radius:0 0 0 0"></div>
<div class="t" style="left:741px;top:693px;color:#b3b3b3">Material Mode</div>
<div class="a" style="left:737px;top:704px;width:143px;height:19px;border:1px solid rgba(90,90,90,0.35);border-radius:5px;background:rgba(120,120,120,0.06)"></div>
<div class="t" style="left:764px;top:707px;color:rgba(120,120,120,0.3)">Toggle Quad View</div>
<div class="a" style="left:736px;top:730px;width:144px;height:1px;background:rgba(90,90,90,0.3)"></div>
<svg class="a" style="left:738px;top:739px;" width="9" height="8" viewBox="0 0 9 8"><path d="M0 0.5 H9 L4.5 8Z" fill="rgba(110,110,110,0.35)"/></svg>
<div class="t" style="left:750px;top:735px;color:rgba(120,120,120,0.3);font-size:12px">Shading</div>
<div class="t" style="left:741px;top:722px;color:#fff"><u>G</u>LSL</div>
<div class="t" style="left:741px;top:744px;color:#fff"><u>M</u>ultitexture</div>
<div class="a" style="left:736px;top:763px;width:144px;height:19px;background:linear-gradient(#383838,#1e1e1e);border-radius:0 0 4px 4px"></div>
<div class="t" style="left:741px;top:767px;color:#cfcfcf">Multitexture</div>
<svg class="a" style="left:871px;top:767px;" width="6" height="12" viewBox="0 0 6 12"><path d="M0 5 L3 0 L6 5Z M0 7 L3 12 L6 7Z" fill="#ccc"/></svg>
<div class="a" style="left:906px;top:68px;width:504px;height:215px;background:#393939"></div>
<svg class="a" style="left:906px;top:68px;overflow:hidden" width="504" height="215" viewBox="0 0 504 215"><line x1="197.6" y1="42.6" x2="184.0" y2="158.4" stroke="#4e4e4e" stroke-width="1" /><line x1="197.6" y1="42.6" x2="318.5" y2="52.9" stroke="#4e4e4e" stroke-width="1" /><line x1="205.2" y1="43.2" x2="192.1" y2="159.1" stroke="#4e4e4e" stroke-width="1" /><line x1="196.8" y1="49.8" x2="318.2" y2="60.2" stroke="#4e4e4e" stroke-width="1" /><line x1="212.7" y1="43.9" x2="200.2" y2="159.9" stroke="#4e4e4e" stroke-width="1" /><line x1="195.9" y1="57.1" x2="317.9" y2="67.6" stroke="#4e4e4e" stroke-width="1" /><line x1="220.3" y1="44.5" x2="208.3" y2="160.6" stroke="#4e4e4e" stroke-width="1" /><line x1="195.0" y1="64.3" x2="317.5" y2="74.9" stroke="#4e4e4e" stroke-width="1" /><line x1="227.8" y1="45.2" x2="216.3" y2="161.4" stroke="#4e4e4e" stroke-width="1" /><line x1="194.2" y1="71.6" x2="317.2" y2="82.2" stroke="#4e4e4e" stroke-width="1" /><line x1="235.4" y1="45.8" x2="224.4" y2="162.1" stroke="#4e4e4e" stroke-width="1" /><line x1="193.3" y1="78.8" x2="316.9" y2="89.6" stroke="#4e4e4e" stroke-width="1" /><line x1="242.9" y1="46.5" x2="232.5" y2="162.9" stroke="#4e4e4e" stroke-width="1" /><line x1="192.5" y1="86.0" x2="316.6" y2="96.9" stroke="#4e4e4e" stroke-width="1" /><line x1="250.5" y1="47.1" x2="240.6" y2="163.6" stroke="#4e4e4e" stroke-width="1" /><line x1="191.6" y1="93.3" x2="316.3" y2="104.3" stroke="#4e4e4e" stroke-width="1" /><line x1="258.0" y1="47.8" x2="248.7" y2="164.4" stroke="#4e4e4e" stroke-width="1" /><line x1="190.8" y1="100.5" x2="316.0" y2="111.6" stroke="#4e4e4e" stroke-width="1" /><line x1="265.6" y1="48.4" x2="256.8" y2="165.1" stroke="#4e4e4e" stroke-width="1" /><line x1="190.0" y1="107.7" x2="315.6" y2="118.9" stroke="#4e4e4e" stroke-width="1" /><line x1="273.2" y1="49.0" x2="264.9" y2="165.8" stroke="#4e4e4e" stroke-width="1" /><line x1="189.1" y1="115.0" x2="315.3" y2="126.3" stroke="#4e4e4e" stroke-width="1" /><line x1="280.7" y1="49.7" x2="273.0" y2="166.6" stroke="#4e4e4e" stroke-width="1" /><line x1="188.2" y1="122.2" x2="315.0" y2="133.6" stroke="#4e4e4e" stroke-width="1" /><line x1="288.3" y1="50.3" x2="281.1" y2="167.3" stroke="#4e4e4e" stroke-width="1" /><line x1="187.4" y1="129.4" x2="314.7" y2="141.0" stroke="#4e4e4e" stroke-width="1" /><line x1="295.8" y1="51.0" x2="289.1" y2="168.1" stroke="#4e4e4e" stroke-width="1" /><line x1="186.5" y1="136.7" x2="314.4" y2="148.3" stroke="#4e4e4e" stroke-width="1" /><line x1="303.4" y1="51.6" x2="297.2" y2="168.8" stroke="#4e4e4e" stroke-width="1" /><line x1="185.7" y1="143.9" x2="314.0" y2="155.6" stroke="#4e4e4e" stroke-width="1" /><line x1="310.9" y1="52.3" x2="305.3" y2="169.6" stroke="#4e4e4e" stroke-width="1" /><line x1="184.8" y1="151.2" x2="313.7" y2="163.0" stroke="#4e4e4e" stroke-width="1" /><line x1="318.5" y1="52.9" x2="313.4" y2="170.3" stroke="#4e4e4e" stroke-width="1" /><line x1="184.0" y1="158.4" x2="313.4" y2="170.3" stroke="#4e4e4e" stroke-width="1" /><line x1="258.9" y1="49.4" x2="247.0" y2="170.3" stroke="#1f8f1f" stroke-width="1" /><line x1="190.8" y1="102.2" x2="313.4" y2="114.1" stroke="#9a1f1f" stroke-width="1" /><line x1="233.4" y1="42.6" x2="282.7" y2="136.3" stroke="#f0a53a" stroke-width="1" stroke-dasharray="2 2"/><path d="M242 93 L252 91 L255 94 L255 108 L244 109 L241 106Z" fill="#a0a0aa" stroke="#555" stroke-width="0.6"/><path d="M242 93 L252 91 L255 94 L245 96Z" fill="#d0d0d8"/><circle cx="254.0999999999999" cy="96.80000000000001" r="9" fill="none" stroke="#fff" stroke-width="1.1"/><circle cx="254.0999999999999" cy="96.80000000000001" r="9" fill="none" stroke="#e00" stroke-width="1.1" stroke-dasharray="4.7 4.7"/><path d="M234.0999999999999 96.80000000000001H249.0999999999999M259.0999999999999 96.80000000000001H274.0999999999999M254.0999999999999 77.80000000000001V91.80000000000001M254.0999999999999 101.80000000000001V116.80000000000001" stroke="#000" stroke-width="1.2"/><line x1="288.3" y1="128.0" x2="292.5" y2="78.0" stroke="#1cdc1c" stroke-width="1.4" /><path d="M293.5999999999999 64 L298 81 L289 81Z" fill="#1cdc1c"/><line x1="302.0" y1="145.5" x2="354.0" y2="150.5" stroke="#e01c1c" stroke-width="1.4" /><path d="M370.5999999999999 152.4 L351.79999999999995 156.5 L352.5 147Z" fill="#e01c1c"/><circle cx="286.79999999999995" cy="144" r="15" fill="none" stroke="#fff" stroke-width="1.1"/><circle cx="286.79999999999995" cy="144" r="7.6" fill="none" stroke="#f0a53a" stroke-width="1.1" stroke-dasharray="2.4 2.6"/><circle cx="286.79999999999995" cy="144" r="2.6" fill="#f0a53a"/><line x1="298.8" y1="132.0" x2="303.8" y2="127.0" stroke="#f0a53a" stroke-width="1" stroke-dasharray="2.5 2"/><line x1="269.8" y1="144.0" x2="262.8" y2="144.0" stroke="#f0a53a" stroke-width="1" stroke-dasharray="2.5 2"/><line x1="270.8" y1="138.2" x2="264.2" y2="135.8" stroke="#f0a53a" stroke-width="1" stroke-dasharray="2.5 2"/><line x1="286.8" y1="161.0" x2="286.8" y2="168.0" stroke="#f0a53a" stroke-width="1" stroke-dasharray="2.5 2"/><path d="M307 161 L316 167 L313 158Z" fill="none" stroke="#111" stroke-width="1.1"/><path d="M26.5 190 V172" stroke="#1c1cd0" stroke-width="2"/><path d="M26.5 158 V190" stroke="#1cb01c" stroke-width="1.5"/><path d="M26.5 190 L50 192" stroke="#d01c1c" stroke-width="2.5"/><text x="30" y="164" fill="#22c022" font-size="11" font-family="Liberation Sans">y</text><text x="54" y="191" fill="#d02020" font-size="11" font-family="Liberation Sans">x</text><text x="31" y="172" fill="#3030ff" font-size="9" font-family="Liberation Sans">z</text></svg>
<div class="t" style="left:926px;top:78px;color:#fff">User Persp</div>
<div class="t" style="left:976px;top:264px;color:#fff">(1) Lamp</div>
<div class="a a" style="left:906px;top:90px;width:13px;height:15px;border-radius:0 4px 4px 0;background:#2e2e2e"></div>
<svg class="a" style="left:908px;top:93px;" width="9" height="9" viewBox="0 0 9 9"><path d="M4.5 1V8M1 4.5H8" stroke="#888" stroke-width="1.6"/></svg>
<div class="a a" style="left:1400px;top:90px;width:10px;height:15px;border-radius:4px 0 0 4px;background:#2e2e2e"></div>
<svg class="a" style="left:1402px;top:93px;" width="9" height="9" viewBox="0 0 9 9"><path d="M4.5 1V8M1 4.5H8" stroke="#888" stroke-width="1.6"/></svg>
<div class="a" style="left:906px;top:283px;width:504px;height:27px;background:#727272"></div>
<div class="a" style="left:906px;top:283px;width:504px;height:1px;background:#7e7e7e"></div>
<div class="a" style="left:906px;top:310px;width:504px;height:1px;background:#000"></div>
<div class="a mn" style="left:914px;top:289px;width:30px;height:19px;border-radius:5px 5px 5px 5px;"></div>
<svg class="a" style="left:918px;top:291px;" width="15" height="15" viewBox="0 0 15 15"><path d="M7.5 1 L14 4 V11 L7.5 14 L1 11 V4Z" fill="#d8d8d8" stroke="#1a1a1a" stroke-width="1"/><path d="M7.5 7 L14 4 V11 L7.5 14Z" fill="#8a8a8a"/><path d="M1 4 L7.5 7 L14 4 L7.5 1Z" fill="#f4f4f4"/></svg>
<svg class="a" style="left:935px;top:292px;" width="6" height="12" viewBox="0 0 6 12"><path d="M0 5 L3 0 L6 5Z M0 7 L3 12 L6 7Z" fill="#aaa"/></svg>
<div class="t" style="left:956px;top:292px;">View</div>
<div class="t" style="left:1001px;top:292px;">Select</div>
<div class="t" style="left:1052px;top:292px;">Add</div>
<div class="t" style="left:1091px;top:292px;">Object</div>
<div class="a mn" style="left:1138px;top:289px;width:111px;height:19px;border-radius:5px 5px 5px 5px;"></div>
<svg class="a" style="left:1143px;top:291px;" width="14" height="14" viewBox="0 0 14 14"><path d="M7 0.8 L13 3.8 V10.5 L7 13.4 L1 10.5 V3.8Z" fill="#e8a24a" stroke="#2a2a2a" stroke-width="0.9"/><path d="M1 3.8 L7 6.8 L13 3.8 M7 6.8 V13.4" fill="none" stroke="#fff3" stroke-width="0.9"/><path d="M7 0.8 L13 3.8 L7 6.8 L1 3.8Z" fill="#fff" opacity="0.45"/><path d="M7 6.8 L13 3.8 V10.5 L7 13.4Z" fill="#000" opacity="0.12"/></svg>
<div class="t" style="left:1161px;top:292px;color:#e6e6e6">Object Mode</div>
<svg class="a" style="left:1239px;top:292px;" width="6" height="12" viewBox="0 0 6 12"><path d="M0 5 L3 0 L6 5Z M0 7 L3 12 L6 7Z" fill="#bbb"/></svg>
<div class="a mn" style="left:1255px;top:289px;width:35px;height:19px;border-radius:5px 5px 5px 5px;"></div>
<svg class="a" style="left:1260px;top:291px;" width="15" height="15" viewBox="0 0 15 15"><circle cx="7.5" cy="7.5" r="6" fill="#f2f2f2" stroke="#222" stroke-width="0.8"/></svg>
<svg class="a" style="left:1279px;top:292px;" width="6" height="12" viewBox="0 0 6 12"><path d="M0 5 L3 0 L6 5Z M0 7 L3 12 L6 7Z" fill="#bbb"/></svg>
<div class="a mn" style="left:1295px;top:289px;width:55px;height:19px;border-radius:5px 5px 5px 5px;"></div>
<svg class="a" style="left:1299px;top:291px;" width="16" height="16" viewBox="0 0 16 16"><circle cx="5" cy="5" r="4.2" fill="#e6e6e6" stroke="#222" stroke-width="0.8"/><circle cx="10.5" cy="10.5" r="4.2" fill="#e6e6e6" stroke="#222" stroke-width="0.8"/><rect x="6" y="6" width="3.6" height="3.6" fill="#fff" stroke="#1a5ad8" stroke-width="1.2"/></svg>
<svg class="a" style="left:1318px;top:292px;" width="6" height="12" viewBox="0 0 6 12"><path d="M0 5 L3 0 L6 5Z M0 7 L3 12 L6 7Z" fill="#bbb"/></svg>
<div class="a tb" style="left:1328px;top:289px;width:22px;height:19px;border-radius:0 5px 5px 0;background:linear-gradient(#aaa,#8e8e8e)"></div>
<svg class="a" style="left:1331px;top:291px;" width="16" height="15" viewBox="0 0 16 15"><circle cx="3" cy="2.5" r="1.6" fill="#fff" stroke="#2a5ad0" stroke-width="1"/><circle cx="8" cy="2.5" r="1.6" fill="#fff" stroke="#2a5ad0" stroke-width="1"/><circle cx="13" cy="2.5" r="1.6" fill="#fff" stroke="#2a5ad0" stroke-width="1"/><path d="M1.5 10 H14.5 M1.5 10 L4.5 7 M1.5 10 L4.5 13 M14.5 10 L11.5 7 M14.5 10 L11.5 13" stroke="#222" stroke-width="2.8" stroke-linecap="round"/><path d="M1.5 10 H14.5 M1.5 10 L4.5 7 M1.5 10 L4.5 13 M14.5 10 L11.5 7 M14.5 10 L11.5 13" stroke="#fff" stroke-width="1.3" stroke-linecap="round"/><path d="M1 10 H15" stroke="#222" stroke-width="0.5"/></svg>
<div class="a mn" style="left:1356px;top:289px;width:21px;height:19px;border-radius:5px 0 0 5px;background:linear-gradient(#5a5a5a,#464646)"></div>
<svg class="a" style="left:1359px;top:291px;" width="15" height="15" viewBox="0 0 15 15"><path d="M7.5 8.5 V1.5" stroke="#111" stroke-width="3"/><path d="M7.5 8.5 L1.5 13" stroke="#111" stroke-width="3"/><path d="M7.5 8.5 L13.5 13" stroke="#111" stroke-width="3"/><path d="M7.5 8.5 V1.5" stroke="#4a80e0" stroke-width="1.8"/><path d="M7.5 8.5 L1.5 13" stroke="#d83a2a" stroke-width="1.8"/><path d="M7.5 8.5 L13.5 13" stroke="#5ac030" stroke-width="1.8"/><circle cx="7.5" cy="2" r="1" fill="#fff"/><circle cx="2" cy="12.6" r="1" fill="#fff"/><circle cx="13" cy="12.6" r="1" fill="#fff"/></svg>
<div class="a a" style="left:1376px;top:289px;width:21px;height:19px;border-radius:0 0 0 0;background:linear-gradient(#6a9ae0,#4c7cc8);border:1px solid #262626"></div>
<svg class="a" style="left:1380px;top:292px;" width="13" height="13" viewBox="0 0 13 13"><path d="M1 12 L11 2 M5 2 H11 V8" fill="none" stroke="#112" stroke-width="3"/><path d="M1 12 L11 2 M5 2 H11 V8" fill="none" stroke="#cfe0ff" stroke-width="1.4"/></svg>
<div class="a mn" style="left:1396px;top:289px;width:20px;height:19px;border-radius:0 0 0 0;background:linear-gradient(#5a5a5a,#464646)"></div>
<svg class="a" style="left:1400px;top:292px;" width="10" height="13" viewBox="0 0 10 13"><path d="M1 12 C1 5 5 2 10 2" fill="none" stroke="#8ab4f0" stroke-width="1.6"/></svg>
<svg class="a" style="left:906px;top:297px;" width="13" height="13" viewBox="0 0 13 13"><path d="M0 0.5 L12.5 13 M0 4.5 L8.5 13 M0 8.5 L4.5 13" stroke="#111" stroke-width="1.1"/><path d="M0 2 L11 13 M0 6 L7 13 M0 10 L3 13" stroke="#b8b8b8" stroke-width="0.9"/></svg>
<div class="a" style="left:906px;top:311px;width:504px;height:673px;background:#727272"></div>
<div class="a" style="left:906px;top:311px;width:504px;height:26px;background:#727272"></div>
<div class="a" style="left:906px;top:311px;width:504px;height:1px;background:#7e7e7e"></div>
<div class="a" style="left:906px;top:337px;width:504px;height:1px;background:#6a6a6a"></div>
<div class="a mn" style="left:915px;top:314px;width:30px;height:19px;border-radius:5px 5px 5px 5px;"></div>
<svg class="a" style="left:919px;top:316px;" width="15" height="15" viewBox="0 0 15 15"><rect x="1" y="2" width="13" height="5" rx="2.5" fill="#444" stroke="#eee" stroke-width="1.1"/><rect x="9" y="2.5" width="4.5" height="4" rx="2" fill="#eee"/><rect x="1" y="9" width="13" height="5" rx="2.5" fill="#eee" stroke="#111" stroke-width="0.8"/></svg>
<svg class="a" style="left:936px;top:317px;" width="6" height="12" viewBox="0 0 6 12"><path d="M0 5 L3 0 L6 5Z M0 7 L3 12 L6 7Z" fill="#aaa"/></svg>
<div class="a mn" style="left:953px;top:314px;width:180px;height:19px;border-radius:5px 5px 5px 5px;"></div>
<svg class="a" style="left:955px;top:316px;" width="16" height="16" viewBox="0 0 16 16"><rect x="2" y="4" width="12" height="9" fill="#444" stroke="#ccc" stroke-width="1"/><circle cx="9" cy="9" r="3" fill="#333" stroke="#bbb"/><rect x="3" y="2" width="3" height="2" fill="#bbb"/><circle cx="5" cy="6" r="0.8" fill="#e22"/></svg>
<div class="a" style="left:973px;top:314px;width:1px;height:19px;background:#262626"></div>
<svg class="a" style="left:975px;top:316px;" width="16" height="16" viewBox="0 0 16 16"><rect x="4" y="4" width="10" height="10" fill="#bba" stroke="#222" stroke-width="0.8"/><rect x="2" y="1" width="10" height="10" fill="#ccd" stroke="#222" stroke-width="0.8"/><rect x="6" y="3" width="3" height="5" fill="#4a7ad0"/></svg>
<div class="a" style="left:993px;top:314px;width:1px;height:19px;background:#262626"></div>
<svg class="a" style="left:995px;top:316px;" width="16" height="16" viewBox="0 0 16 16"><circle cx="5" cy="11" r="3.5" fill="#ddd" stroke="#222" stroke-width="0.8"/><rect x="8" y="3" width="6" height="10" rx="3" fill="#5a8be0" stroke="#222" stroke-width="0.8"/><circle cx="3.5" cy="3" r="1.8" fill="#ee5"/></svg>
<div class="a" style="left:1013px;top:314px;width:1px;height:19px;background:#262626"></div>
<svg class="a" style="left:1015px;top:316px;" width="16" height="16" viewBox="0 0 16 16"><circle cx="8" cy="8" r="6.5" fill="#3a6cb0" stroke="#222" stroke-width="0.8"/><path d="M4 5 C6 4 7 7 5 9 C7 10 9 8 10 11 M9 3 C11 5 13 6 12 8" stroke="#7ac070" stroke-width="2" fill="none"/></svg>
<div class="a" style="left:1033px;top:314px;width:1px;height:19px;background:#262626"></div>
<svg class="a" style="left:1035px;top:316px;" width="16" height="16" viewBox="0 0 16 16"><path d="M8 1.5 L14 4.5 V11.5 L8 14.5 L2 11.5 V4.5Z" fill="#e8a24a" stroke="#222" stroke-width="0.9"/><path d="M2 4.5 L8 7.5 L14 4.5 L8 1.5Z" fill="#f6d29a"/><path d="M8 7.5 L14 4.5 V11.5 L8 14.5Z" fill="#c07a30"/></svg>
<div class="a" style="left:1053px;top:314px;width:1px;height:19px;background:#262626"></div>
<svg class="a" style="left:1055px;top:316px;" width="16" height="16" viewBox="0 0 16 16"><path d="M3 11 L6 8 M10 8 L13 5" stroke="#ccc" stroke-width="1.5"/><rect x="1.5" y="8" width="6" height="5" rx="2.5" transform="rotate(-45 4.5 10.5)" fill="none" stroke="#ddd" stroke-width="1.4"/><rect x="8.5" y="3" width="6" height="5" rx="2.5" transform="rotate(-45 11.5 5.5)" fill="none" stroke="#ddd" stroke-width="1.4"/></svg>
<div class="a" style="left:1073px;top:314px;width:1px;height:19px;background:#262626"></div>
<div class="a a" style="left:1073px;top:314px;width:20px;height:19px;border-radius:0 0 0 0;background:linear-gradient(#6a9ae0,#4c7cc8);border-top:1px solid #262626;border-bottom:1px solid #262626"></div>
<svg class="a" style="left:1075px;top:316px;" width="16" height="16" viewBox="0 0 16 16"><path d="M2 4 C9 3 14 8 14 14" fill="none" stroke="#222" stroke-width="2.6"/><path d="M2 4 C9 3 14 8 14 14" fill="none" stroke="#f0e6a0" stroke-width="1.4"/><path d="M2 14 L9 7 M2 14 H6 M2 14 V10" stroke="#f0e6a0" stroke-width="1.3"/></svg>
<div class="a" style="left:1093px;top:314px;width:1px;height:19px;background:#262626"></div>
<svg class="a" style="left:1095px;top:316px;" width="16" height="16" viewBox="0 0 16 16"><rect x="2" y="2" width="3" height="3" fill="#eee"/><rect x="2" y="5" width="3" height="3" fill="#c33"/><rect x="2" y="8" width="3" height="3" fill="#eee"/><rect x="2" y="11" width="3" height="3" fill="#c33"/><rect x="5" y="2" width="3" height="3" fill="#c33"/><rect x="5" y="5" width="3" height="3" fill="#eee"/><rect x="5" y="8" width="3" height="3" fill="#c33"/><rect x="5" y="11" width="3" height="3" fill="#eee"/><rect x="8" y="2" width="3" height="3" fill="#eee"/><rect x="8" y="5" width="3" height="3" fill="#c33"/><rect x="8" y="8" width="3" height="3" fill="#eee"/><rect x="8" y="11" width="3" height="3" fill="#c33"/><rect x="11" y="2" width="3" height="3" fill="#c33"/><rect x="11" y="5" width="3" height="3" fill="#eee"/><rect x="11" y="8" width="3" height="3" fill="#c33"/><rect x="11" y="11" width="3" height="3" fill="#eee"/></svg>
<div class="a" style="left:1113px;top:314px;width:1px;height:19px;background:#262626"></div>
<svg class="a" style="left:1115px;top:316px;" width="16" height="16" viewBox="0 0 16 16"><path d="M2 8 L6 13 L13 3" fill="none" stroke="#6a8ad8" stroke-width="2.4"/><circle cx="12" cy="4" r="2.5" fill="#ddd" stroke="#333" stroke-width="0.6"/></svg>
<svg class="a" style="left:1398px;top:311px;" width="13" height="13" viewBox="0 0 13 13"><path d="M0 0.5 L12.5 13 M0 4.5 L8.5 13 M0 8.5 L4.5 13" stroke="#111" stroke-width="1.1"/><path d="M0 2 L11 13 M0 6 L7 13 M0 10 L3 13" stroke="#b8b8b8" stroke-width="0.9"/></svg>
<svg class="a" style="left:916px;top:348px;" width="15" height="15" viewBox="0 0 15 15"><path d="M3 13 L7 9 M6 4 L11 9 M8 2 L13 7 M5 6 L9 10 L11 6" stroke="#222" stroke-width="2.4" fill="none"/><path d="M3 13 L7 9 M6 4 L11 9 M8 2 L13 7" stroke="#eee" stroke-width="1.1" fill="none"/></svg>
<svg class="a" style="left:939px;top:347px;" width="16" height="16" viewBox="0 0 16 16"><circle cx="5" cy="11" r="3.5" fill="#ddd" stroke="#222" stroke-width="0.8"/><rect x="8" y="3" width="6" height="10" rx="3" fill="#5a8be0" stroke="#222" stroke-width="0.8"/><circle cx="3.5" cy="3" r="1.8" fill="#ee5"/></svg>
<svg class="a" style="left:959px;top:352px;" width="4" height="7" viewBox="0 0 4 7"><path d="M0 0 L4 3.5 L0 7Z" fill="#222"/></svg>
<svg class="a" style="left:979px;top:348px;" width="14" height="14" viewBox="0 0 14 14"><path d="M7 0.8 L13 3.8 V10.5 L7 13.4 L1 10.5 V3.8Z" fill="#e8a24a" stroke="#2a2a2a" stroke-width="0.9"/><path d="M1 3.8 L7 6.8 L13 3.8 M7 6.8 V13.4" fill="none" stroke="#fff3" stroke-width="0.9"/><path d="M7 0.8 L13 3.8 L7 6.8 L1 3.8Z" fill="#fff" opacity="0.45"/><path d="M7 6.8 L13 3.8 V10.5 L7 13.4Z" fill="#000" opacity="0.12"/></svg>
<div class="t" style="left:998px;top:349px;">Lamp</div>
<svg class="a" style="left:1043px;top:352px;" width="4" height="7" viewBox="0 0 4 7"><path d="M0 0 L4 3.5 L0 7Z" fill="#222"/></svg>
<svg class="a" style="left:1060px;top:348px;" width="16" height="16" viewBox="0 0 16 16"><path d="M2 4 C9 3 14 8 14 14" fill="none" stroke="#222" stroke-width="2.6"/><path d="M2 4 C9 3 14 8 14 14" fill="none" stroke="#e8dc9a" stroke-width="1.4"/><path d="M2 14 L9 7 M2 14 H6 M2 14 V10" stroke="#e8dc9a" stroke-width="1.3"/></svg>
<div class="t" style="left:1082px;top:349px;">Lamp</div>
<div class="a mn" style="left:914px;top:382px;width:32px;height:19px;border-radius:5px 0 0 5px;"></div>
<svg class="a" style="left:917px;top:384px;" width="16" height="16" viewBox="0 0 16 16"><path d="M2 4 C9 3 14 8 14 14" fill="none" stroke="#222" stroke-width="2.6"/><path d="M2 4 C9 3 14 8 14 14" fill="none" stroke="#e8dc9a" stroke-width="1.4"/><path d="M2 14 L9 7 M2 14 H6 M2 14 V10" stroke="#e8dc9a" stroke-width="1.3"/></svg>
<svg class="a" style="left:935px;top:385px;" width="6" height="12" viewBox="0 0 6 12"><path d="M0 5 L3 0 L6 5Z M0 7 L3 12 L6 7Z" fill="#aaa"/></svg>
<div class="a tf" style="left:945px;top:382px;width:266px;height:19px;border-radius:0 0 0 0;background:linear-gradient(#b0b0b0,#9e9e9e)"></div>
<div class="t" style="left:953px;top:385px;">Lamp</div>
<div class="a tb" style="left:1210px;top:382px;width:21px;height:19px;border-radius:0 5px 5px 0;background:linear-gradient(#8a8a8a,#7a7a7a)"></div>
<div class="t" style="left:1210px;top:382px;width:21px;height:19px;line-height:19px;text-align:center;">F</div>
<div class="a" style="left:911px;top:408px;width:492px;height:1px;background:#5a5a5a"></div>
<div class="a" style="left:911px;top:409px;width:492px;height:1px;background:#7c7c7c"></div>
<svg class="a" style="left:919px;top:416px;" width="9" height="8" viewBox="0 0 9 8"><path d="M0 0.5 H9 L4.5 8Z" fill="#111"/></svg>
<div class="t" style="left:931px;top:413px;font-size:12px">Preview</div>
<svg class="a" style="left:1389px;top:422px;" width="12" height="6" viewBox="0 0 12 6"><rect x="0" y="0" width="1" height="1" fill="#aaa"/><rect x="1" y="1" width="1" height="1" fill="#333"/><rect x="0" y="3" width="1" height="1" fill="#aaa"/><rect x="1" y="4" width="1" height="1" fill="#333"/><rect x="3" y="0" width="1" height="1" fill="#aaa"/><rect x="4" y="1" width="1" height="1" fill="#333"/><rect x="3" y="3" width="1" height="1" fill="#aaa"/><rect x="4" y="4" width="1" height="1" fill="#333"/><rect x="6" y="0" width="1" height="1" fill="#aaa"/><rect x="7" y="1" width="1" height="1" fill="#333"/><rect x="6" y="3" width="1" height="1" fill="#aaa"/><rect x="7" y="4" width="1" height="1" fill="#333"/><rect x="9" y="0" width="1" height="1" fill="#aaa"/><rect x="10" y="1" width="1" height="1" fill="#333"/><rect x="9" y="3" width="1" height="1" fill="#aaa"/><rect x="10" y="4" width="1" height="1" fill="#333"/></svg>
<div class="a" style="left:914px;top:442px;width:488px;height:111px;border:1px solid #3a3a3a;border-radius:6px;background:radial-gradient(ellipse 140px 90px at 50% 105%, #ffffff 0%, #e6e6e6 40%, #d2d2d2 100%) , #d2d2d2;"></div>
<div class="a" style="left:1150px;top:556px;width:16px;height:1px;background:#222"></div>
<div class="a" style="left:1150px;top:559px;width:16px;height:1px;background:#222"></div>
<div class="a" style="left:1150px;top:557px;width:16px;height:1px;background:#999"></div>
<div class="a" style="left:911px;top:568px;width:492px;height:1px;background:#5a5a5a"></div>
<div class="a" style="left:911px;top:569px;width:492px;height:1px;background:#7c7c7c"></div>
<svg class="a" style="left:919px;top:576px;" width="9" height="8" viewBox="0 0 9 8"><path d="M0 0.5 H9 L4.5 8Z" fill="#111"/></svg>
<div class="t" style="left:931px;top:573px;font-size:12px">Lamp</div>
<svg class="a" style="left:1389px;top:582px;" width="12" height="6" viewBox="0 0 12 6"><rect x="0" y="0" width="1" height="1" fill="#aaa"/><rect x="1" y="1" width="1" height="1" fill="#333"/><rect x="0" y="3" width="1" height="1" fill="#aaa"/><rect x="1" y="4" width="1" height="1" fill="#333"/><rect x="3" y="0" width="1" height="1" fill="#aaa"/><rect x="4" y="1" width="1" height="1" fill="#333"/><rect x="3" y="3" width="1" height="1" fill="#aaa"/><rect x="4" y="4" width="1" height="1" fill="#333"/><rect x="6" y="0" width="1" height="1" fill="#aaa"/><rect x="7" y="1" width="1" height="1" fill="#333"/><rect x="6" y="3" width="1" height="1" fill="#aaa"/><rect x="7" y="4" width="1" height="1" fill="#333"/><rect x="9" y="0" width="1" height="1" fill="#aaa"/><rect x="10" y="1" width="1" height="1" fill="#333"/><rect x="9" y="3" width="1" height="1" fill="#aaa"/><rect x="10" y="4" width="1" height="1" fill="#333"/></svg>
<div class="a mn" style="left:914px;top:602px;width:97px;height:19px;border-radius:5px 0 0 5px;"></div>
<div class="t" style="left:914px;top:602px;width:97px;height:19px;line-height:19px;text-align:center;color:#fff">Point</div>
<div class="a mn" style="left:1010px;top:602px;width:98px;height:19px;border-radius:0 0 0 0;"></div>
<div class="t" style="left:1010px;top:602px;width:98px;height:19px;line-height:19px;text-align:center;color:#fff">Sun</div>
<div class="a mn" style="left:1107px;top:602px;width:97px;height:19px;border-radius:0 0 0 0;"></div>
<div class="t" style="left:1107px;top:602px;width:97px;height:19px;line-height:19px;text-align:center;color:#fff">Spot</div>
<div class="a a" style="left:1203px;top:602px;width:98px;height:19px;border-radius:0 0 0 0;background:linear-gradient(#6b96dc,#4b78c4);border:1px solid #262626"></div>
<div class="t" style="left:1203px;top:602px;width:98px;height:19px;line-height:19px;text-align:center;">Hemi</div>
<div class="a mn" style="left:1300px;top:602px;width:102px;height:19px;border-radius:0 5px 5px 0;"></div>
<div class="t" style="left:1300px;top:602px;width:102px;height:19px;line-height:19px;text-align:center;color:#fff">Area</div>
<div class="a a" style="left:914px;top:627px;width:240px;height:19px;border-radius:5px 5px 5px 5px;background:#fff;border:1px solid #2b2b2b"></div>
<div class="a nm" style="left:914px;top:649px;width:240px;height:19px;border-radius:9px 9px 9px 9px;"></div>
<svg class="a" style="left:919px;top:655px;" width="5" height="7" viewBox="0 0 5 7"><path d="M4 0 L0 3.5 L4 7Z" fill="#6a6a6a"/></svg>
<svg class="a" style="left:1144px;top:655px;" width="5" height="7" viewBox="0 0 5 7"><path d="M1 0 L5 3.5 L1 7Z" fill="#6a6a6a"/></svg>
<div class="t" style="left:930px;top:649px;height:19px;line-height:19px;color:#000">Energy:</div>
<div class="t" style="left:914px;top:649px;width:223px;height:19px;line-height:19px;text-align:right;color:#000">1.000</div>
<div class="a ck" style="left:1165px;top:630px;width:14px;height:14px;border-radius:3px 3px 3px 3px;"></div>
<div class="t" style="left:1187px;top:631px;">Negative</div>
<div class="a ck" style="left:1165px;top:652px;width:14px;height:14px;border-radius:3px 3px 3px 3px;"></div>
<div class="t" style="left:1187px;top:653px;">This Layer Only</div>
<div class="a ck" style="left:1165px;top:674px;width:14px;height:14px;border-radius:3px 3px 3px 3px;"></div>
<svg class="a" style="left:1165px;top:674px;" width="14" height="14" viewBox="0 0 14 14"><path d="M3 7.5 L6 10.5 L11.5 2.5" fill="none" stroke="#fff" stroke-width="1.7"/></svg>
<div class="t" style="left:1187px;top:675px;color:#fff">Specular</div>
<div class="a ck" style="left:1165px;top:696px;width:14px;height:14px;border-radius:3px 3px 3px 3px;"></div>
<svg class="a" style="left:1165px;top:696px;" width="14" height="14" viewBox="0 0 14 14"><path d="M3 7.5 L6 10.5 L11.5 2.5" fill="none" stroke="#fff" stroke-width="1.7"/></svg>
<div class="t" style="left:1187px;top:697px;color:#fff">Diffuse</div>
<div class="a" style="left:911px;top:719px;width:492px;height:1px;background:#5a5a5a"></div>
<div class="a" style="left:911px;top:720px;width:492px;height:1px;background:#7c7c7c"></div>
<svg class="a" style="left:920px;top:727px;" width="8" height="9" viewBox="0 0 8 9"><path d="M0.5 0 V9 L8 4.5Z" fill="#111"/></svg>
<div class="t" style="left:931px;top:724px;font-size:12px">Custom Properties</div>
<svg class="a" style="left:1389px;top:733px;" width="12" height="6" viewBox="0 0 12 6"><rect x="0" y="0" width="1" height="1" fill="#aaa"/><rect x="1" y="1" width="1" height="1" fill="#333"/><rect x="0" y="3" width="1" height="1" fill="#aaa"/><rect x="1" y="4" width="1" height="1" fill="#333"/><rect x="3" y="0" width="1" height="1" fill="#aaa"/><rect x="4" y="1" width="1" height="1" fill="#333"/><rect x="3" y="3" width="1" height="1" fill="#aaa"/><rect x="4" y="4" width="1" height="1" fill="#333"/><rect x="6" y="0" width="1" height="1" fill="#aaa"/><rect x="7" y="1" width="1" height="1" fill="#333"/><rect x="6" y="3" width="1" height="1" fill="#aaa"/><rect x="7" y="4" width="1" height="1" fill="#333"/><rect x="9" y="0" width="1" height="1" fill="#aaa"/><rect x="10" y="1" width="1" height="1" fill="#333"/><rect x="9" y="3" width="1" height="1" fill="#aaa"/><rect x="10" y="4" width="1" height="1" fill="#333"/></svg>
<svg class="a" style="left:906px;top:972px;" width="13" height="13" viewBox="0 0 13 13"><path d="M0 0.5 L12.5 13 M0 4.5 L8.5 13 M0 8.5 L4.5 13" stroke="#111" stroke-width="1.1"/><path d="M0 2 L11 13 M0 6 L7 13 M0 10 L3 13" stroke="#b8b8b8" stroke-width="0.9"/></svg>
<div class="a" style="left:1px;top:866px;width:904px;height:26px;background:#727272"></div>
<div class="a" style="left:1px;top:866px;width:904px;height:1px;background:#7e7e7e"></div>
<div class="a" style="left:1px;top:892px;width:904px;height:1px;background:#000"></div>
<svg class="a" style="left:1px;top:880px;" width="13" height="13" viewBox="0 0 13 13"><path d="M0 0.5 L12.5 13 M0 4.5 L8.5 13 M0 8.5 L4.5 13" stroke="#111" stroke-width="1.1"/><path d="M0 2 L11 13 M0 6 L7 13 M0 10 L3 13" stroke="#b8b8b8" stroke-width="0.9"/></svg>
<div class="a mn" style="left:10px;top:869px;width:30px;height:19px;border-radius:5px 5px 5px 5px;"></div>
<svg class="a" style="left:14px;top:871px;" width="15" height="15" viewBox="0 0 15 15"><path d="M7.5 1 L14 4 V11 L7.5 14 L1 11 V4Z" fill="#d8d8d8" stroke="#1a1a1a" stroke-width="1"/><path d="M7.5 7 L14 4 V11 L7.5 14Z" fill="#8a8a8a"/><path d="M1 4 L7.5 7 L14 4 L7.5 1Z" fill="#f4f4f4"/></svg>
<svg class="a" style="left:31px;top:872px;" width="6" height="12" viewBox="0 0 6 12"><path d="M0 5 L3 0 L6 5Z M0 7 L3 12 L6 7Z" fill="#aaa"/></svg>
<div class="t" style="left:52px;top:872px;">View</div>
<div class="t" style="left:97px;top:872px;">Select</div>
<div class="t" style="left:148px;top:872px;">Add</div>
<div class="t" style="left:187px;top:872px;">Object</div>
<div class="a mn" style="left:233px;top:869px;width:114px;height:19px;border-radius:5px 5px 5px 5px;"></div>
<svg class="a" style="left:239px;top:871px;" width="14" height="14" viewBox="0 0 14 14"><path d="M7 0.8 L13 3.8 V10.5 L7 13.4 L1 10.5 V3.8Z" fill="#e8a24a" stroke="#2a2a2a" stroke-width="0.9"/><path d="M1 3.8 L7 6.8 L13 3.8 M7 6.8 V13.4" fill="none" stroke="#fff3" stroke-width="0.9"/><path d="M7 0.8 L13 3.8 L7 6.8 L1 3.8Z" fill="#fff" opacity="0.45"/><path d="M7 6.8 L13 3.8 V10.5 L7 13.4Z" fill="#000" opacity="0.12"/></svg>
<div class="t" style="left:257px;top:872px;color:#e6e6e6">Object Mode</div>
<svg class="a" style="left:337px;top:872px;" width="6" height="12" viewBox="0 0 6 12"><path d="M0 5 L3 0 L6 5Z M0 7 L3 12 L6 7Z" fill="#bbb"/></svg>
<div class="a mn" style="left:352px;top:869px;width:34px;height:19px;border-radius:5px 5px 5px 5px;"></div>
<svg class="a" style="left:356px;top:872px;" width="15" height="15" viewBox="0 0 15 15"><defs><clipPath id="shc"><circle cx="7" cy="7" r="6.3"/></clipPath></defs><circle cx="7" cy="7" r="6.3" fill="#eee"/><g clip-path="url(#shc)"><rect x="0.7" y="0.7" width="4.2" height="4.2" fill="#b01010"/><rect x="0.7" y="9.1" width="4.2" height="4.2" fill="#b01010"/><rect x="4.9" y="4.9" width="4.2" height="4.2" fill="#b01010"/><rect x="9.1" y="0.7" width="4.2" height="4.2" fill="#b01010"/><rect x="9.1" y="9.1" width="4.2" height="4.2" fill="#b01010"/></g><circle cx="7" cy="7" r="6.3" fill="none" stroke="#222" stroke-width="0.9"/></svg>
<svg class="a" style="left:376px;top:872px;" width="6" height="12" viewBox="0 0 6 12"><path d="M0 5 L3 0 L6 5Z M0 7 L3 12 L6 7Z" fill="#bbb"/></svg>
<div class="a mn" style="left:392px;top:869px;width:34px;height:19px;border-radius:5px 5px 5px 5px;"></div>
<svg class="a" style="left:395px;top:871px;" width="16" height="16" viewBox="0 0 16 16"><circle cx="5" cy="5" r="4.2" fill="#e6e6e6" stroke="#222" stroke-width="0.8"/><circle cx="10.5" cy="10.5" r="4.2" fill="#e6e6e6" stroke="#222" stroke-width="0.8"/><rect x="6" y="6" width="3.6" height="3.6" fill="#fff" stroke="#1a5ad8" stroke-width="1.2"/></svg>
<svg class="a" style="left:415px;top:872px;" width="6" height="12" viewBox="0 0 6 12"><path d="M0 5 L3 0 L6 5Z M0 7 L3 12 L6 7Z" fill="#bbb"/></svg>
<div class="a tb" style="left:425px;top:869px;width:22px;height:19px;border-radius:0 5px 5px 0;background:linear-gradient(#aaa,#8e8e8e)"></div>
<svg class="a" style="left:428px;top:871px;" width="16" height="15" viewBox="0 0 16 15"><circle cx="3" cy="2.5" r="1.6" fill="#fff" stroke="#2a5ad0" stroke-width="1"/><circle cx="8" cy="2.5" r="1.6" fill="#fff" stroke="#2a5ad0" stroke-width="1"/><circle cx="13" cy="2.5" r="1.6" fill="#fff" stroke="#2a5ad0" stroke-width="1"/><path d="M1.5 10 H14.5 M1.5 10 L4.5 7 M1.5 10 L4.5 13 M14.5 10 L11.5 7 M14.5 10 L11.5 13" stroke="#222" stroke-width="2.8" stroke-linecap="round"/><path d="M1.5 10 H14.5 M1.5 10 L4.5 7 M1.5 10 L4.5 13 M14.5 10 L11.5 7 M14.5 10 L11.5 13" stroke="#fff" stroke-width="1.3" stroke-linecap="round"/></svg>
<div class="a mn" style="left:451px;top:869px;width:21px;height:19px;border-radius:5px 0 0 5px;background:linear-gradient(#5a5a5a,#464646)"></div>
<svg class="a" style="left:454px;top:871px;" width="15" height="15" viewBox="0 0 15 15"><path d="M7.5 8.5 V1.5" stroke="#111" stroke-width="3"/><path d="M7.5 8.5 L1.5 13" stroke="#111" stroke-width="3"/><path d="M7.5 8.5 L13.5 13" stroke="#111" stroke-width="3"/><path d="M7.5 8.5 V1.5" stroke="#4a80e0" stroke-width="1.8"/><path d="M7.5 8.5 L1.5 13" stroke="#d83a2a" stroke-width="1.8"/><path d="M7.5 8.5 L13.5 13" stroke="#5ac030" stroke-width="1.8"/><circle cx="7.5" cy="2" r="1" fill="#fff"/><circle cx="2" cy="12.6" r="1" fill="#fff"/><circle cx="13" cy="12.6" r="1" fill="#fff"/></svg>
<div class="a a" style="left:471px;top:869px;width:20px;height:19px;border-radius:0 0 0 0;background:linear-gradient(#6a9ae0,#4c7cc8);border:1px solid #262626"></div>
<svg class="a" style="left:474px;top:872px;" width="13" height="13" viewBox="0 0 13 13"><path d="M1 12 L11 2 M5 2 H11 V8" fill="none" stroke="#112" stroke-width="3"/><path d="M1 12 L11 2 M5 2 H11 V8" fill="none" stroke="#cfe0ff" stroke-width="1.4"/></svg>
<div class="a mn" style="left:490px;top:869px;width:21px;height:19px;border-radius:0 0 0 0;background:linear-gradient(#5a5a5a,#464646)"></div>
<svg class="a" style="left:494px;top:872px;" width="12" height="13" viewBox="0 0 12 13"><path d="M1 12 C1 5 5 2 11 2" fill="none" stroke="#8ab4f0" stroke-width="1.6"/></svg>
<div class="a mn" style="left:510px;top:869px;width:21px;height:19px;border-radius:0 5px 5px 0;background:linear-gradient(#5a5a5a,#464646)"></div>
<svg class="a" style="left:513px;top:872px;" width="13" height="13" viewBox="0 0 13 13"><path d="M1 12 L8 5" stroke="#8ab4f0" stroke-width="1.6"/><rect x="7" y="1" width="5" height="5" fill="#8ab4f0"/></svg>
<div class="a mn" style="left:532px;top:869px;width:71px;height:19px;border-radius:5px 5px 5px 5px;"></div>
<div class="t" style="left:538px;top:872px;color:#e6e6e6">Global</div>
<svg class="a" style="left:593px;top:872px;" width="6" height="12" viewBox="0 0 6 12"><path d="M0 5 L3 0 L6 5Z M0 7 L3 12 L6 7Z" fill="#bbb"/></svg>
<div class="a tb" style="left:608px;top:869px;width:49px;height:19px;border-radius:5px 5px 5px 5px;background:linear-gradient(#a4a4a4,#8e8e8e)"></div>
<div class="a" style="left:617.8px;top:869px;width:1px;height:19px;background:#3a3a3a"></div>
<div class="a" style="left:627.6px;top:869px;width:1px;height:19px;background:#3a3a3a"></div>
<div class="a" style="left:637.4px;top:869px;width:1px;height:19px;background:#3a3a3a"></div>
<div class="a" style="left:647.2px;top:869px;width:1px;height:19px;background:#3a3a3a"></div>
<div class="a" style="left:608px;top:878px;width:49px;height:1px;background:#3a3a3a"></div>
<svg class="a" style="left:610px;top:870px;" width="6" height="6" viewBox="0 0 6 6"><circle cx="3" cy="3" r="2.3" fill="#888" stroke="#222" stroke-width="0.8"/></svg>
<div class="a tb" style="left:663px;top:869px;width:49px;height:19px;border-radius:5px 5px 5px 5px;background:linear-gradient(#a4a4a4,#8e8e8e)"></div>
<div class="a" style="left:672.8px;top:869px;width:1px;height:19px;background:#3a3a3a"></div>
<div class="a" style="left:682.6px;top:869px;width:1px;height:19px;background:#3a3a3a"></div>
<div class="a" style="left:692.4px;top:869px;width:1px;height:19px;background:#3a3a3a"></div>
<div class="a" style="left:702.2px;top:869px;width:1px;height:19px;background:#3a3a3a"></div>
<div class="a" style="left:663px;top:878px;width:49px;height:1px;background:#3a3a3a"></div>
<svg class="a" style="left:705px;top:870px;" width="6" height="6" viewBox="0 0 6 6"><circle cx="3" cy="3" r="2.3" fill="#f39a3c" stroke="#222" stroke-width="0.8"/></svg>
<div class="a tb" style="left:718px;top:869px;width:20px;height:19px;border-radius:5px 5px 5px 5px;background:linear-gradient(#a4a4a4,#8e8e8e)"></div>
<svg class="a" style="left:721px;top:872px;" width="14" height="13" viewBox="0 0 14 13"><rect x="1" y="1" width="9" height="9" fill="#ddd" stroke="#222" stroke-width="0.9"/><path d="M9 6 C12 6 13 9 11 11 M8 12 C6 10 8 7 10 8" fill="none" stroke="#111" stroke-width="1.4"/></svg>
<div class="a tb" style="left:743px;top:869px;width:20px;height:19px;border-radius:5px 5px 5px 5px;background:linear-gradient(#a4a4a4,#8e8e8e)"></div>
<svg class="a" style="left:746px;top:872px;" width="14" height="14" viewBox="0 0 14 14"><circle cx="7" cy="7" r="5.5" fill="none" stroke="#777" stroke-width="1"/><circle cx="7" cy="7" r="3" fill="none" stroke="#777" stroke-width="1"/></svg>
<div class="a tb" style="left:768px;top:869px;width:21px;height:19px;border-radius:5px 0 0 5px;background:linear-gradient(#a4a4a4,#8e8e8e)"></div>
<svg class="a" style="left:771px;top:871px;" width="15" height="15" viewBox="0 0 15 15"><path d="M3 13 V7 A4.5 4.5 0 0 1 12 7 V13 M6 13 V7.5 A1.5 1.5 0 0 1 9 7.5 V13" fill="none" stroke="#666" stroke-width="1.6"/></svg>
<div class="a mn" style="left:788px;top:869px;width:33px;height:19px;border-radius:0 0 0 0;"></div>
<svg class="a" style="left:791px;top:872px;" width="16" height="13" viewBox="0 0 16 13"><path d="M2 2V11 M14 2V11 M5 4V9 M8 2V11 M11 4V9 M1 6.5H15" stroke="#9ac0ff" stroke-width="1.3"/></svg>
<svg class="a" style="left:810px;top:872px;" width="6" height="12" viewBox="0 0 6 12"><path d="M0 5 L3 0 L6 5Z M0 7 L3 12 L6 7Z" fill="#bbb"/></svg>
<div class="a tb" style="left:820px;top:869px;width:25px;height:19px;border-radius:0 5px 5px 0;background:linear-gradient(#a4a4a4,#8e8e8e)"></div>
<svg class="a" style="left:824px;top:871px;" width="16" height="16" viewBox="0 0 16 16"><path d="M3 1V15 M9 1V15 M1 5H15 M1 11H15" stroke="#222" stroke-width="1.5"/><circle cx="6" cy="6" r="3.2" fill="#4a8ae8" stroke="#fff" stroke-width="1"/></svg>
<div class="a tb" style="left:848px;top:869px;width:22px;height:19px;border-radius:5px 0 0 5px;background:linear-gradient(#a4a4a4,#8e8e8e)"></div>
<svg class="a" style="left:851px;top:872px;" width="16" height="14" viewBox="0 0 16 14"><rect x="1" y="3" width="14" height="10" fill="#444" stroke="#ddd" stroke-width="1"/><circle cx="9" cy="8" r="3" fill="#333" stroke="#ddd"/><path d="M13 0 L14 2 L16 2.5 L14 3 L13 5 L12 3 L10 2.5 L12 2Z" fill="#ffe070"/></svg>
<div class="a tb" style="left:869px;top:869px;width:19px;height:19px;border-radius:0 5px 5px 0;background:linear-gradient(#a4a4a4,#8e8e8e)"></div>
<svg class="a" style="left:871px;top:872px;" width="15" height="14" viewBox="0 0 15 14"><rect x="1" y="6" width="13" height="7" fill="#444" stroke="#ddd" stroke-width="1"/><path d="M1 5 L13 1 L14 4 L2 7Z" fill="#ddd" stroke="#222" stroke-width="0.6"/><path d="M4 4 L6 6 M8 3 L10 5" stroke="#222"/></svg>
<div class="a" style="left:1px;top:893px;width:904px;height:46px;background:#747474"></div>
<div class="a" style="left:1px;top:893px;width:156px;height:46px;background:#464646"></div>
<div class="a" style="left:816px;top:893px;width:89px;height:46px;background:#464646"></div>
<div class="a" style="left:22px;top:893px;width:1px;height:46px;background:rgba(0,0,0,0.16)"></div>
<div class="a" style="left:49px;top:893px;width:1px;height:46px;background:rgba(0,0,0,0.16)"></div>
<div class="a" style="left:75px;top:893px;width:1px;height:46px;background:rgba(0,0,0,0.16)"></div>
<div class="a" style="left:102px;top:893px;width:1px;height:46px;background:rgba(0,0,0,0.16)"></div>
<div class="a" style="left:128px;top:893px;width:1px;height:46px;background:rgba(0,0,0,0.16)"></div>
<div class="a" style="left:181px;top:893px;width:1px;height:46px;background:rgba(0,0,0,0.16)"></div>
<div class="a" style="left:207px;top:893px;width:1px;height:46px;background:rgba(0,0,0,0.16)"></div>
<div class="a" style="left:234px;top:893px;width:1px;height:46px;background:rgba(0,0,0,0.16)"></div>
<div class="a" style="left:260px;top:893px;width:1px;height:46px;background:rgba(0,0,0,0.16)"></div>
<div class="a" style="left:287px;top:893px;width:1px;height:46px;background:rgba(0,0,0,0.16)"></div>
<div class="a" style="left:313px;top:893px;width:1px;height:46px;background:rgba(0,0,0,0.16)"></div>
<div class="a" style="left:340px;top:893px;width:1px;height:46px;background:rgba(0,0,0,0.16)"></div>
<div class="a" style="left:366px;top:893px;width:1px;height:46px;background:rgba(0,0,0,0.16)"></div>
<div class="a" style="left:393px;top:893px;width:1px;height:46px;background:rgba(0,0,0,0.16)"></div>
<div class="a" style="left:419px;top:893px;width:1px;height:46px;background:rgba(0,0,0,0.16)"></div>
<div class="a" style="left:445px;top:893px;width:1px;height:46px;background:rgba(0,0,0,0.16)"></div>
<div class="a" style="left:472px;top:893px;width:1px;height:46px;background:rgba(0,0,0,0.16)"></div>
<div class="a" style="left:498px;top:893px;width:1px;height:46px;background:rgba(0,0,0,0.16)"></div>
<div class="a" style="left:525px;top:893px;width:1px;height:46px;background:rgba(0,0,0,0.16)"></div>
<div class="a" style="left:551px;top:893px;width:1px;height:46px;background:rgba(0,0,0,0.16)"></div>
<div class="a" style="left:578px;top:893px;width:1px;height:46px;background:rgba(0,0,0,0.16)"></div>
<div class="a" style="left:604px;top:893px;width:1px;height:46px;background:rgba(0,0,0,0.16)"></div>
<div class="a" style="left:631px;top:893px;width:1px;height:46px;background:rgba(0,0,0,0.16)"></div>
<div class="a" style="left:657px;top:893px;width:1px;height:46px;background:rgba(0,0,0,0.16)"></div>
<div class="a" style="left:684px;top:893px;width:1px;height:46px;background:rgba(0,0,0,0.16)"></div>
<div class="a" style="left:710px;top:893px;width:1px;height:46px;background:rgba(0,0,0,0.16)"></div>
<div class="a" style="left:736px;top:893px;width:1px;height:46px;background:rgba(0,0,0,0.16)"></div>
<div class="a" style="left:763px;top:893px;width:1px;height:46px;background:rgba(0,0,0,0.16)"></div>
<div class="a" style="left:789px;top:893px;width:1px;height:46px;background:rgba(0,0,0,0.16)"></div>
<div class="a" style="left:816px;top:893px;width:1px;height:46px;background:rgba(0,0,0,0.16)"></div>
<div class="a" style="left:842px;top:893px;width:1px;height:46px;background:rgba(0,0,0,0.16)"></div>
<div class="a" style="left:869px;top:893px;width:1px;height:46px;background:rgba(0,0,0,0.16)"></div>
<div class="a" style="left:895px;top:893px;width:1px;height:46px;background:rgba(0,0,0,0.16)"></div>
<div class="a" style="left:154px;top:893px;width:1px;height:46px;background:#1a1a1a"></div>
<div class="a" style="left:155px;top:893px;width:3px;height:46px;background:#5fd13a"></div>
<div class="a" style="left:1px;top:939px;width:904px;height:18px;background:#727272"></div>
<div class="a" style="left:5px;top:940px;width:895px;height:13px;border-radius:7px;border:1px solid #3c3c3c;background:linear-gradient(#959595,#adadad)"></div>
<div class="a" style="left:7px;top:942px;width:9px;height:9px;border-radius:5px;background:#6d6d6d"></div>
<div class="a" style="left:889px;top:942px;width:9px;height:9px;border-radius:5px;background:#6d6d6d"></div>
<div class="t" style="left:28px;top:941px;width:40px;text-align:center;line-height:13px;font-size:11.5px">-40</div>
<div class="t" style="left:81px;top:941px;width:40px;text-align:center;line-height:13px;font-size:11.5px">-20</div>
<div class="t" style="left:136px;top:941px;width:40px;text-align:center;line-height:13px;font-size:11.5px">0</div>
<div class="t" style="left:189px;top:941px;width:40px;text-align:center;line-height:13px;font-size:11.5px">20</div>
<div class="t" style="left:241px;top:941px;width:40px;text-align:center;line-height:13px;font-size:11.5px">40</div>
<div class="t" style="left:293px;top:941px;width:40px;text-align:center;line-height:13px;font-size:11.5px">60</div>
<div class="t" style="left:345px;top:941px;width:40px;text-align:center;line-height:13px;font-size:11.5px">80</div>
<div class="t" style="left:397px;top:941px;width:40px;text-align:center;line-height:13px;font-size:11.5px">100</div>
<div class="t" style="left:449px;top:941px;width:40px;text-align:center;line-height:13px;font-size:11.5px">120</div>
<div class="t" style="left:501px;top:941px;width:40px;text-align:center;line-height:13px;font-size:11.5px">140</div>
<div class="t" style="left:554px;top:941px;width:40px;text-align:center;line-height:13px;font-size:11.5px">160</div>
<div class="t" style="left:606px;top:941px;width:40px;text-align:center;line-height:13px;font-size:11.5px">180</div>
<div class="t" style="left:659px;top:941px;width:40px;text-align:center;line-height:13px;font-size:11.5px">200</div>
<div class="t" style="left:712px;top:941px;width:40px;text-align:center;line-height:13px;font-size:11.5px">220</div>
<div class="t" style="left:766px;top:941px;width:40px;text-align:center;line-height:13px;font-size:11.5px">240</div>
<div class="t" style="left:817px;top:941px;width:40px;text-align:center;line-height:13px;font-size:11.5px">260</div>
<svg class="a" style="left:893px;top:893px;" width="13" height="13" viewBox="0 0 13 13"><path d="M0 0.5 L12.5 13 M0 4.5 L8.5 13 M0 8.5 L4.5 13" stroke="#111" stroke-width="1.1"/><path d="M0 2 L11 13 M0 6 L7 13 M0 10 L3 13" stroke="#b8b8b8" stroke-width="0.9"/></svg>
<div class="a" style="left:1px;top:957px;width:904px;height:26px;background:#727272"></div>
<div class="a" style="left:1px;top:957px;width:904px;height:1px;background:#7e7e7e"></div>
<svg class="a" style="left:1px;top:970px;" width="13" height="13" viewBox="0 0 13 13"><path d="M0 0.5 L12.5 13 M0 4.5 L8.5 13 M0 8.5 L4.5 13" stroke="#111" stroke-width="1.1"/><path d="M0 2 L11 13 M0 6 L7 13 M0 10 L3 13" stroke="#b8b8b8" stroke-width="0.9"/></svg>
<div class="a mn" style="left:10px;top:961px;width:30px;height:19px;border-radius:5px 5px 5px 5px;"></div>
<svg class="a" style="left:14px;top:963px;" width="15" height="15" viewBox="0 0 15 15"><circle cx="7.5" cy="7.5" r="6.5" fill="#f0f0f0" stroke="#222" stroke-width="1"/><path d="M7.5 2V3.3M7.5 11.7V13M2 7.5H3.3M11.7 7.5H13M3.6 3.6L4.4 4.4M10.6 10.6L11.4 11.4M3.6 11.4L4.4 10.6M11.4 3.6L10.6 4.4" stroke="#666" stroke-width="0.8"/><path d="M7.5 7.5 L10.5 3.8" stroke="#333" stroke-width="1.1"/><path d="M7.5 7.5 L10 10.5" stroke="#d22" stroke-width="1.5"/></svg>
<svg class="a" style="left:31px;top:964px;" width="6" height="12" viewBox="0 0 6 12"><path d="M0 5 L3 0 L6 5Z M0 7 L3 12 L6 7Z" fill="#aaa"/></svg>
<div class="t" style="left:52px;top:964px;">View</div>
<div class="t" style="left:97px;top:964px;">Marker</div>
<div class="t" style="left:152px;top:964px;">Frame</div>
<div class="t" style="left:204px;top:964px;">Playback</div>
<div class="a tb" style="left:263px;top:961px;width:20px;height:19px;border-radius:5px 0 0 5px;background:linear-gradient(#a4a4a4,#8e8e8e)"></div>
<svg class="a" style="left:266px;top:963px;" width="14" height="14" viewBox="0 0 14 14"><circle cx="7" cy="7" r="6" fill="#eee" stroke="#222" stroke-width="0.9"/><path d="M7 7 V2 A5 5 0 0 1 12 7Z" fill="#f39a3c"/></svg>
<div class="a tb" style="left:282px;top:961px;width:20px;height:19px;border-radius:0 5px 5px 0;background:linear-gradient(#a4a4a4,#8e8e8e)"></div>
<svg class="a" style="left:286px;top:963px;" width="12" height="14" viewBox="0 0 12 14"><path d="M3 7 V4.5 A3 3 0 0 1 9 4.5 V7" fill="none" stroke="#222" stroke-width="1.6"/><rect x="1.5" y="7" width="9" height="6" fill="#eee" stroke="#222" stroke-width="0.9"/></svg>
<div class="a nm" style="left:307px;top:961px;width:117px;height:19px;border-radius:9px 0 0 9px;"></div>
<svg class="a" style="left:312px;top:967px;" width="5" height="7" viewBox="0 0 5 7"><path d="M4 0 L0 3.5 L4 7Z" fill="#6a6a6a"/></svg>
<svg class="a" style="left:414px;top:967px;" width="5" height="7" viewBox="0 0 5 7"><path d="M1 0 L5 3.5 L1 7Z" fill="#6a6a6a"/></svg>
<div class="t" style="left:323px;top:961px;height:19px;line-height:19px;color:#000">Start:</div>
<div class="t" style="left:307px;top:961px;width:100px;height:19px;line-height:19px;text-align:right;color:#000">1</div>
<div class="a nm" style="left:423px;top:961px;width:113px;height:19px;border-radius:0 9px 9px 0;"></div>
<svg class="a" style="left:428px;top:967px;" width="5" height="7" viewBox="0 0 5 7"><path d="M4 0 L0 3.5 L4 7Z" fill="#6a6a6a"/></svg>
<svg class="a" style="left:526px;top:967px;" width="5" height="7" viewBox="0 0 5 7"><path d="M1 0 L5 3.5 L1 7Z" fill="#6a6a6a"/></svg>
<div class="t" style="left:439px;top:961px;height:19px;line-height:19px;color:#000">End:</div>
<div class="t" style="left:423px;top:961px;width:96px;height:19px;line-height:19px;text-align:right;color:#000">250</div>
<div class="a nm" style="left:541px;top:961px;width:89px;height:19px;border-radius:9px 9px 9px 9px;"></div>
<svg class="a" style="left:546px;top:967px;" width="5" height="7" viewBox="0 0 5 7"><path d="M4 0 L0 3.5 L4 7Z" fill="#6a6a6a"/></svg>
<svg class="a" style="left:620px;top:967px;" width="5" height="7" viewBox="0 0 5 7"><path d="M1 0 L5 3.5 L1 7Z" fill="#6a6a6a"/></svg>
<div class="t" style="left:557px;top:961px;height:19px;line-height:19px;color:#000"></div>
<div class="t" style="left:541px;top:961px;width:72px;height:19px;line-height:19px;text-align:right;color:#000">1</div>
<div class="a tb" style="left:647px;top:961px;width:119px;height:19px;border-radius:5px 5px 5px 5px;background:linear-gradient(#a8a8a8,#8e8e8e)"></div>
<svg class="a" style="left:650px;top:963px;" width="15" height="15" viewBox="0 0 15 15"><path d="M2 2V13M13 2L7 7.5L13 13ZM8 2L2 7.5L8 13Z" fill="#fff" stroke="#111" stroke-width="0.8"/></svg>
<div class="a" style="left:667px;top:961px;width:1px;height:19px;background:#2b2b2b"></div>
<svg class="a" style="left:670px;top:963px;" width="15" height="15" viewBox="0 0 15 15"><path d="M13 2L7.5 7.5L13 13ZM8 2L2.5 7.5L8 13Z" fill="#fff" stroke="#111" stroke-width="0.8"/></svg>
<div class="a" style="left:687px;top:961px;width:1px;height:19px;background:#2b2b2b"></div>
<svg class="a" style="left:690px;top:963px;" width="15" height="15" viewBox="0 0 15 15"><path d="M12 1.5L3 7.5L12 13.5Z" fill="#fff" stroke="#111" stroke-width="0.9"/></svg>
<div class="a" style="left:707px;top:961px;width:1px;height:19px;background:#2b2b2b"></div>
<svg class="a" style="left:710px;top:963px;" width="15" height="15" viewBox="0 0 15 15"><path d="M3 1.5L12 7.5L3 13.5Z" fill="#fff" stroke="#111" stroke-width="0.9"/></svg>
<div class="a" style="left:727px;top:961px;width:1px;height:19px;background:#2b2b2b"></div>
<svg class="a" style="left:730px;top:963px;" width="15" height="15" viewBox="0 0 15 15"><path d="M2 2L7.5 7.5L2 13ZM7 2L12.5 7.5L7 13Z" fill="#fff" stroke="#111" stroke-width="0.8"/></svg>
<div class="a" style="left:747px;top:961px;width:1px;height:19px;background:#2b2b2b"></div>
<svg class="a" style="left:750px;top:963px;" width="15" height="15" viewBox="0 0 15 15"><path d="M13 2V13M2 2L8 7.5L2 13ZM7 2L13 7.5L7 13Z" fill="#fff" stroke="#111" stroke-width="0.8"/></svg>
<div class="a mn" style="left:772px;top:961px;width:115px;height:19px;border-radius:5px 5px 5px 5px;"></div>
<div class="t" style="left:780px;top:964px;color:#e6e6e6">No Sync</div>
<svg class="a" style="left:876px;top:964px;" width="6" height="12" viewBox="0 0 6 12"><path d="M0 5 L3 0 L6 5Z M0 7 L3 12 L6 7Z" fill="#bbb"/></svg>
<div class="a tb" style="left:901px;top:961px;width:6px;height:19px;border-radius:5px 0 0 5px;background:linear-gradient(#a4a4a4,#8e8e8e)"></div>
<div class="a" style="left:905px;top:68px;width:1px;height:915px;background:#000"></div>
<svg class="a" style="left:1398px;top:68px;" width="12" height="12" viewBox="0 0 12 12"><path d="M0 0 L12 12 M4 0 L12 8 M8 0 L12 4" stroke="#1e1e1e" stroke-width="1.3"/><path d="M1.5 0 L12 10.5 M5.5 0 L12 6.5" stroke="#b0b0b0" stroke-width="0.7"/></svg>
<svg class="a" style="left:893px;top:68px;" width="12" height="12" viewBox="0 0 12 12"><path d="M0 0 L12 12 M4 0 L12 8 M8 0 L12 4" stroke="#1e1e1e" stroke-width="1.3"/><path d="M1.5 0 L12 10.5 M5.5 0 L12 6.5" stroke="#b0b0b0" stroke-width="0.7"/></svg>
<svg class="a" style="left:1398px;top:311px;" width="12" height="12" viewBox="0 0 12 12"><path d="M0 0 L12 12 M4 0 L12 8 M8 0 L12 4" stroke="#1e1e1e" stroke-width="1.3"/><path d="M1.5 0 L12 10.5 M5.5 0 L12 6.5" stroke="#b0b0b0" stroke-width="0.7"/></svg>
<svg class="a" style="left:893px;top:893px;" width="12" height="12" viewBox="0 0 12 12"><path d="M0 0 L12 12 M4 0 L12 8 M8 0 L12 4" stroke="#1e1e1e" stroke-width="1.3"/><path d="M1.5 0 L12 10.5 M5.5 0 L12 6.5" stroke="#b0b0b0" stroke-width="0.7"/></svg>
<svg class="a" style="left:725px;top:672px;" width="170" height="120" viewBox="0 0 170 120"><path d="M7 8 L158 11 L162 112 L6 114 Z" fill="none" stroke="#f6e400" stroke-width="6" stroke-linejoin="round"/></svg>
<svg class="a" style="left:1190px;top:582px;" width="130" height="62" viewBox="0 0 130 62"><path d="M9.1 8.4 L8.1 50.4 L119.3 52 L119.3 9 L15.5 15.3" fill="none" stroke="#f6e400" stroke-width="5.8" stroke-linejoin="round" stroke-linecap="round"/></svg>
<svg class="a" style="left:335px;top:836px;" width="75" height="75" viewBox="0 0 75 75"><path d="M7.1 6.1 L65.4 15.2 L55.4 67.8 L5.8 65.7 L7.6 7" fill="none" stroke="#f6e400" stroke-width="5.2" stroke-linejoin="round" stroke-linecap="round"/></svg></body></html>
